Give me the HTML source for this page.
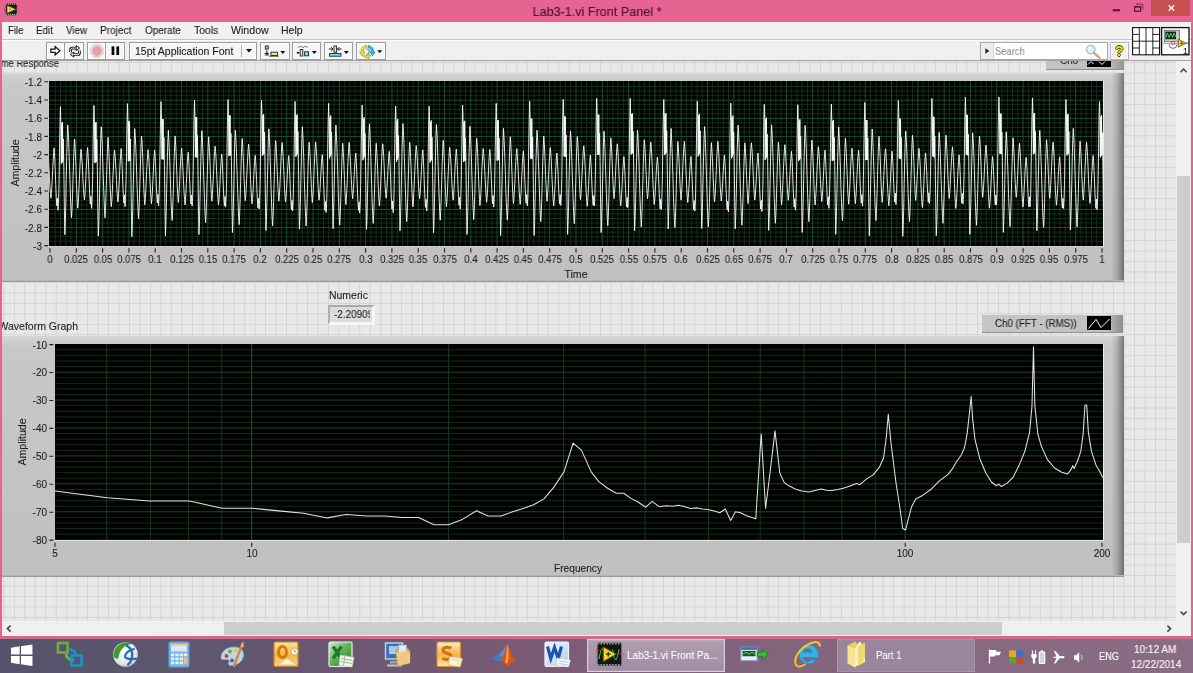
<!DOCTYPE html>
<html lang="en"><head><meta charset="utf-8"><title>Lab3-1.vi Front Panel</title>
<style>
html,body{margin:0;padding:0}
body{width:1193px;height:673px;overflow:hidden;position:relative;background:#E66492;font-family:"Liberation Sans",sans-serif;}
.t{position:absolute;white-space:nowrap;display:block;will-change:transform;-webkit-text-stroke:.1px}
.a{position:absolute}
.btn{position:absolute;top:42px;height:16px;border:1px solid #9c9c9c;background:#f5f5f5;box-shadow:inset 0 0 0 1px #fdfdfd}
svg{position:absolute;overflow:visible}
</style></head><body>
<div class="a" id="titlebar" style="left:0;top:0;width:1193px;height:22px;background:#E66492"><svg style="left:3.500px;top:3.200px" width="14.500" height="12.600" viewBox="0 0 14.500 12.600">
<rect x="1.800" y=".3" width="11" height="12" fill="#1a1d10"/>
<path d="M1.800 1.100h11M1.800 11.500h11" stroke="#b9b9b9" stroke-width="1.500" stroke-dasharray="1.100 .9"/>
<path d="M3.200 2.700L11.600 6.300 3.200 9.900z" fill="#efe062" stroke="#8a7c10" stroke-width=".5"/>
<circle cx="6" cy="6.300" r="1.100" fill="#b3a11a"/>
<path d="M0 5.200h2.200" stroke="#d8405a" stroke-width="1"/><path d="M0 7.600h2.200" stroke="#8a3fc0" stroke-width="1.200"/><path d="M12 6.300h2.500" stroke="#d8405a" stroke-width=".9"/></svg><span id="title" class="t" style="left:596.6px;top:3.9px;font-size:13px;line-height:15.35px;color:#4b1230;font-weight:normal;transform:translateX(-50%) scaleX(0.969);transform-origin:50% 0;">Lab3-1.vi Front Panel *</span><div class="a" style="left:1151px;top:0;width:39px;height:16px;background:#C75050"></div><svg style="left:1105px;top:0" width="88" height="22" viewBox="0 0 88 22">
<rect x="7.7" y="9.2" width="7.2" height="2.1" fill="#5e0f35"/>
<path d="M31 4.200h6.800v5.400" fill="none" stroke="#7a2a55" stroke-width="1"/>
<rect x="29.600" y="6.600" width="6" height="4.600" fill="none" stroke="#5e0f35" stroke-width="1.200"/><rect x="29" y="6" width="7.200" height="1.500" fill="#5e0f35"/>
<path d="M63.600 5.200l5.600 5.600M69.200 5.200l-5.600 5.600" stroke="#fff" stroke-width="1.300"/></svg></div><div class="a" id="menubar" style="left:2px;top:22px;width:1189px;height:17.600px;background:#f1f1f1;box-sizing:border-box;border-bottom:1px solid #c3c3c3"></div><div class="a" id="toolbar" style="left:2px;top:39.600px;width:1189px;height:22px;background:#f0f0f0;border-top:1px solid #fafafa;box-sizing:border-box"></div><span id="m0" class="t" style="left:8.2px;transform-origin:0 0;top:23.7px;font-size:10.5px;line-height:12.40px;color:#1b1b1b;font-weight:normal;transform:scaleX(0.910);">File</span><span id="m1" class="t" style="left:36.2px;transform-origin:0 0;top:23.7px;font-size:10.5px;line-height:12.40px;color:#1b1b1b;font-weight:normal;transform:scaleX(0.934);">Edit</span><span id="m2" class="t" style="left:66.0px;transform-origin:0 0;top:23.7px;font-size:10.5px;line-height:12.40px;color:#1b1b1b;font-weight:normal;transform:scaleX(0.930);">View</span><span id="m3" class="t" style="left:100.0px;transform-origin:0 0;top:23.7px;font-size:10.5px;line-height:12.40px;color:#1b1b1b;font-weight:normal;transform:scaleX(0.961);">Project</span><span id="m4" class="t" style="left:144.6px;transform-origin:0 0;top:23.7px;font-size:10.5px;line-height:12.40px;color:#1b1b1b;font-weight:normal;transform:scaleX(0.946);">Operate</span><span id="m5" class="t" style="left:193.6px;transform-origin:0 0;top:23.7px;font-size:10.5px;line-height:12.40px;color:#1b1b1b;font-weight:normal;transform:scaleX(0.987);">Tools</span><span id="m6" class="t" style="left:230.8px;transform-origin:0 0;top:23.7px;font-size:10.5px;line-height:12.40px;color:#1b1b1b;font-weight:normal;transform:scaleX(1.009);">Window</span><span id="m7" class="t" style="left:281.2px;transform-origin:0 0;top:23.7px;font-size:10.5px;line-height:12.40px;color:#1b1b1b;font-weight:normal;transform:scaleX(1.000);">Help</span><div class="btn" style="left:46.0px;width:17.4px"><svg style="left:3.400px;top:2.400px" width="11" height="11.500" viewBox="0 0 12 11"><path d="M1 3.600h4.600V1l5.200 4.500L5.600 10V7.400H1z" fill="#fff" stroke="#111" stroke-width="1.350" stroke-linejoin="miter"/></svg></div><div class="btn" style="left:64.4px;width:17.6px"><svg style="left:2.600px;top:2px" width="14" height="12.500" viewBox="0 0 14 12.500"><g fill="none" stroke-linejoin="round"><g stroke="#111" stroke-width="2.700"><path d="M2.600 7.200V4.600q0-1.500 1.500-1.500H9"/><path d="M11.400 5.400v2.600q0 1.500-1.500 1.500H5"/></g><path d="M8.200 .6l3.400 2.500-3.400 2.500z" fill="#fff" stroke="#111" stroke-width="1"/><path d="M5.800 12L2.400 9.500 5.800 7z" fill="#fff" stroke="#111" stroke-width="1"/><g stroke="#fff" stroke-width=".9"><path d="M2.600 7.200V4.600q0-1.500 1.500-1.500H8.400"/><path d="M11.400 5.400v2.600q0 1.500-1.500 1.500H5.600"/></g></g></svg></div><div class="btn" style="left:87.4px;width:16.8px"><svg style="left:1.300px;top:1px" width="14" height="14" viewBox="0 0 14 14"><path d="M4.300 .8h5.400l3.500 3.500v5.400l-3.500 3.500H4.300L.8 9.700V4.300z" fill="#efd3d6" stroke="#d8cccc" stroke-width=".9"/><circle cx="7" cy="7" r="4.700" fill="#e2a1a9"/></svg></div><div class="btn" style="left:105.3px;width:17.7px"><svg style="left:4.300px;top:3px" width="9" height="10" viewBox="0 0 9 10"><rect x="0.600" y="0.400" width="2.700" height="8.600" fill="#000"/><rect x="5.400" y="0.400" width="2.700" height="8.600" fill="#000"/></svg></div><div class="btn" style="left:129.3px;width:126.1px"><div class="a" style="left:111px;top:2px;width:1px;height:12px;background:#b5b5b5"></div><svg style="left:115.5px;top:6px" width="6" height="4" viewBox="0 0 6 4"><path d="M0 0h6L3 3.6z" fill="#111"/></svg></div><span id="font" class="t" style="left:135.4px;transform-origin:0 0;top:44.6px;font-size:10.5px;line-height:12.40px;color:#1b1b1b;font-weight:normal;transform:scaleX(1.003);">15pt Application Font</span><div class="btn" style="left:260.4px;width:27.4px"><svg style="left:3px;top:1.5px" width="24" height="13" viewBox="0 0 24 13">
<rect x="1.3" y="1" width="3" height="3" fill="#7fe0f0" stroke="#123" stroke-width=".9"/><path d="M2.8 5.2v5.6M.6 8.4h4.4M1 10.6l1.8-2 1.8 2" stroke="#111" stroke-width=".9" fill="none"/>
<rect x="7" y="7.2" width="6.4" height="3.2" fill="#f5ef8c" stroke="#123" stroke-width=".9"/><path d="M5.2 11.2h9.5" stroke="#222" stroke-width=".8"/>
<path d="M16.3 6h5L18.8 9z" fill="#111"/></svg></div><div class="btn" style="left:292.2px;width:27.0px"><svg style="left:3px;top:1.5px" width="24" height="13" viewBox="0 0 24 13">
<path d="M2 2.6c2-1.6 3-1.6 5 0M7 2.6c2-1.6 3-1.6 5 0" stroke="#555" stroke-width=".8" fill="none"/>
<path d="M.8 7.8h2.4" stroke="#111" stroke-width="1.6"/><rect x="4.2" y="4.6" width="2.6" height="6.4" fill="#f5ef8c" stroke="#123" stroke-width=".9"/>
<rect x="8.6" y="6.8" width="4" height="4" fill="#7fe0f0" stroke="#123" stroke-width=".9"/>
<path d="M15.8 6h5L18.3 9z" fill="#111"/></svg></div><div class="btn" style="left:323.6px;width:27.3px"><svg style="left:3px;top:1.5px" width="24" height="13" viewBox="0 0 24 13">
<rect x="6" y="1" width="2.6" height="6.2" fill="#f5ef8c" stroke="#123" stroke-width=".9"/>
<path d="M.8 4h4M9.6 4h4M3.2 2.2L5 4 3.2 5.8M11.2 2.2L9.4 4l1.8 1.8" stroke="#111" stroke-width=".9" fill="none"/>
<rect x="1.6" y="8.6" width="11.4" height="2.6" fill="#7fe0f0" stroke="#123" stroke-width=".9"/>
<path d="M15.8 6h5L18.3 9z" fill="#111"/></svg></div><div class="btn" style="left:356.3px;width:27.7px"><svg style="left:2px;top:.5px" width="26" height="15" viewBox="0 0 26 15">
<path d="M7.200 1.400C3.500 2.200 1.800 5 2.200 8.200L.600 8.400 3.400 12 5.800 8 4.400 8.100C4.200 6 5.200 4.200 7.600 3.600z" fill="#efe23a" stroke="#8f8600" stroke-width=".6"/>
<path d="M4.400 12.400c1.300 1.300 3 1.700 4.600 1.200l.400 1.300 2.200-3.600-4-.9.400 1.300c-.9.200-1.700 0-2.300-.5z" fill="#efe23a" stroke="#8f8600" stroke-width=".6"/>
<path d="M9.200 1.500c3.600.5 5.600 3.200 5.400 6.500l1.600.1-2.700 3.700-2.500-3.900 1.400.1C12.500 6 11.400 4.300 9 3.800z" fill="#3fb4da" stroke="#14708f" stroke-width=".6"/>
<path d="M7.400 5.200c1.500-.3 2.700.6 2.900 2 .2 1.400-.6 2.500-1.900 2.900" fill="none" stroke="#3fb4da" stroke-width="1.500"/>
<path d="M18.200 6.200h5l-2.500 3z" fill="#111"/></svg></div><div class="a" style="left:980px;top:42px;width:126px;height:16px;border:1px solid #a9a9a9;background:#fff;box-shadow:0 1px 1px #d0d0d0"><div class="a" style="left:0;top:0;width:12px;height:16px;background:#ececec;border-right:1px solid #d5d5d5"></div><svg style="left:3.5px;top:5px" width="5" height="6" viewBox="0 0 5 6"><path d="M.3 .3L4.4 3 .3 5.7z" fill="#222"/></svg><svg style="left:104px;top:1px" width="17" height="15" viewBox="0 0 17 15"><circle cx="5.8" cy="5.6" r="4.3" fill="#d9ecf8" stroke="#9cc3de" stroke-width="1.2"/><circle cx="4.8" cy="4.6" r="2" fill="#f4fbff"/><path d="M9 8.8l5.6 5" stroke="#d9a27c" stroke-width="2.4" stroke-linecap="round"/></svg></div><span id="search" class="t" style="left:995.2px;transform-origin:0 0;top:45.3px;font-size:10.5px;line-height:12.40px;color:#8b8b8b;font-weight:normal;transform:scaleX(0.889);">Search</span><div class="btn" style="left:1110.2px;width:17px;height:15.5px;top:42.4px;background:#f0f0f0;border-color:#b7b7b7"></div><span id="q" class="t" style="left:1114.5px;transform-origin:0 0;top:43.4px;font-size:14px;line-height:16.53px;color:#e9dc1c;font-weight:bold;transform:scaleX(1.000);text-shadow:-.7px 0 #4a4a00,.7px 0 #4a4a00,0 .7px #4a4a00,0 -.7px #4a4a00;">?</span><svg style="left:1132px;top:27px" width="58" height="29" viewBox="0 0 58 29">
<rect x=".6" y=".6" width="27" height="27.2" fill="#fff" stroke="#111" stroke-width="1.1"/>
<path d="M7.3 .6v27.2M14 .6v27.2M20.8 .6v27.2M.6 14.2h27M.6 7.4h6.7M.6 21h6.7M20.8 7.4h6.8M20.8 21h6.8" stroke="#111" stroke-width=".9" fill="none"/>
<rect x="29.6" y=".6" width="27.4" height="27.2" fill="#fff" stroke="#111" stroke-width="1.3"/>
<rect x="32.2" y="3.2" width="15.4" height="11.6" fill="#c9c9c9" stroke="#444" stroke-width=".6"/>
<rect x="33.4" y="4.6" width="10.6" height="7.6" fill="#0c2a12"/>
<path d="M33.8 10.6l1.6-4.6 1.7 4.6 1.7-4.6 1.7 4.6 1.6-4.6 1.4 4" stroke="#54e06a" stroke-width=".9" fill="none"/>
<path d="M37 17.4a4 4 0 0 0 8 0" fill="none" stroke="#4c62c8" stroke-width="1"/><circle cx="41" cy="16.2" r="1.8" fill="none" stroke="#d33" stroke-width=".8"/>
<path d="M31 16.4h16" stroke="#d66" stroke-width=".8"/>
<path d="M46.4 12.2l7.6 4-7.6 4z" fill="#f2df1c" stroke="#5a4e00" stroke-width=".8"/><path d="M48 16.2h3.4M49.7 14.6v3.2" stroke="#222" stroke-width=".7"/><path d="M54 16.2h2.6" stroke="#222" stroke-width=".8"/>
</svg><span id="one" class="t" style="left:1182.5px;transform-origin:0 0;top:45.6px;font-size:8.5px;line-height:10.04px;color:#111;font-weight:normal;transform:scaleX(1.000);">1</span><div class="a" id="panel" style="left:2px;top:61px;width:1174px;height:560px;overflow:hidden;background-color:#e8e8e8;background-image:linear-gradient(to right,#d4d4d4 1px,transparent 1px),linear-gradient(to bottom,#d4d4d4 1px,transparent 1px);background-size:10.48px 10.48px;background-position:1.40px 1.10px"><span id="tresp" class="t" style="left:57.0px;transform-origin:0 0;top:-3.4px;font-size:10px;line-height:11.81px;color:#1e1e1e;font-weight:normal;transform:translateX(-100%) scaleX(0.945);transform-origin:100% 0;">Time Response</span><div class="a" style="left:1044px;top:-9px;width:78px;height:17.5px;background:linear-gradient(to right,#c3c3c3 0,#bfbfbf 80%,#969696 100%);border-bottom:1px solid #8f8f8f;box-sizing:border-box"></div><div class="a" style="left:1085.2px;top:-9px;width:23.8px;height:14.7px;background:#000"></div><svg style="left:1085.2px;top:-9px" width="24" height="15" viewBox="0 0 24 15"><path d="M1 12.500L4 9.500l2.500 2.500M12 9.500l3 3 3-3" stroke="#fff" stroke-width="1" fill="none"/></svg><span id="ch0" class="t" style="left:1057.9px;transform-origin:0 0;top:-6.4px;font-size:10px;line-height:11.81px;color:#1e1e1e;font-weight:normal;transform:scaleX(1.000);">Ch0</span><div class="a" style="left:-12px;top:12.299999999999997px;width:1134px;height:209.2px;background:#c1c1c1;background-image:linear-gradient(to right,rgba(0,0,0,0) 0,rgba(0,0,0,0) 1121px,rgba(0,0,0,.10) 1126px,rgba(0,0,0,.42) 1134px),linear-gradient(to bottom,#d8d8d8 0,#d0d0d0 3px,#cacaca 9px,#c8c8c8 14px,#c0c0c0 100%);box-shadow:inset 0 -1px 0 #9a9a9a,inset 0 -2px 0 #b4b4b4"></div><svg style="left:47.0px;top:19.8px;overflow:hidden" width="1054.0" height="165.2" viewBox="49.0 80.8 1054.0 165.2"><rect x="49.0" y="80.8" width="1054.0" height="165.2" fill="#000"/><path d="M55.26 80.8V246.0M60.52 80.8V246.0M65.78 80.8V246.0M71.04 80.8V246.0M81.56 80.8V246.0M86.82 80.8V246.0M92.08 80.8V246.0M97.34 80.8V246.0M107.86 80.8V246.0M113.12 80.8V246.0M118.38 80.8V246.0M123.64 80.8V246.0M134.16 80.8V246.0M139.42 80.8V246.0M144.68 80.8V246.0M149.94 80.8V246.0M160.46 80.8V246.0M165.72 80.8V246.0M170.98 80.8V246.0M176.24 80.8V246.0M186.76 80.8V246.0M192.02 80.8V246.0M197.28 80.8V246.0M202.54 80.8V246.0M213.06 80.8V246.0M218.32 80.8V246.0M223.58 80.8V246.0M228.84 80.8V246.0M239.36 80.8V246.0M244.62 80.8V246.0M249.88 80.8V246.0M255.14 80.8V246.0M265.66 80.8V246.0M270.92 80.8V246.0M276.18 80.8V246.0M281.44 80.8V246.0M291.96 80.8V246.0M297.22 80.8V246.0M302.48 80.8V246.0M307.74 80.8V246.0M318.26 80.8V246.0M323.52 80.8V246.0M328.78 80.8V246.0M334.04 80.8V246.0M344.56 80.8V246.0M349.82 80.8V246.0M355.08 80.8V246.0M360.34 80.8V246.0M370.86 80.8V246.0M376.12 80.8V246.0M381.38 80.8V246.0M386.64 80.8V246.0M397.16 80.8V246.0M402.42 80.8V246.0M407.68 80.8V246.0M412.94 80.8V246.0M423.46 80.8V246.0M428.72 80.8V246.0M433.98 80.8V246.0M439.24 80.8V246.0M449.76 80.8V246.0M455.02 80.8V246.0M460.28 80.8V246.0M465.54 80.8V246.0M476.06 80.8V246.0M481.32 80.8V246.0M486.58 80.8V246.0M491.84 80.8V246.0M502.36 80.8V246.0M507.62 80.8V246.0M512.88 80.8V246.0M518.14 80.8V246.0M528.66 80.8V246.0M533.92 80.8V246.0M539.18 80.8V246.0M544.44 80.8V246.0M554.96 80.8V246.0M560.22 80.8V246.0M565.48 80.8V246.0M570.74 80.8V246.0M581.26 80.8V246.0M586.52 80.8V246.0M591.78 80.8V246.0M597.04 80.8V246.0M607.56 80.8V246.0M612.82 80.8V246.0M618.08 80.8V246.0M623.34 80.8V246.0M633.86 80.8V246.0M639.12 80.8V246.0M644.38 80.8V246.0M649.64 80.8V246.0M660.16 80.8V246.0M665.42 80.8V246.0M670.68 80.8V246.0M675.94 80.8V246.0M686.46 80.8V246.0M691.72 80.8V246.0M696.98 80.8V246.0M702.24 80.8V246.0M712.76 80.8V246.0M718.02 80.8V246.0M723.28 80.8V246.0M728.54 80.8V246.0M739.06 80.8V246.0M744.32 80.8V246.0M749.58 80.8V246.0M754.84 80.8V246.0M765.36 80.8V246.0M770.62 80.8V246.0M775.88 80.8V246.0M781.14 80.8V246.0M791.66 80.8V246.0M796.92 80.8V246.0M802.18 80.8V246.0M807.44 80.8V246.0M817.96 80.8V246.0M823.22 80.8V246.0M828.48 80.8V246.0M833.74 80.8V246.0M844.26 80.8V246.0M849.52 80.8V246.0M854.78 80.8V246.0M860.04 80.8V246.0M870.56 80.8V246.0M875.82 80.8V246.0M881.08 80.8V246.0M886.34 80.8V246.0M896.86 80.8V246.0M902.12 80.8V246.0M907.38 80.8V246.0M912.64 80.8V246.0M923.16 80.8V246.0M928.42 80.8V246.0M933.68 80.8V246.0M938.94 80.8V246.0M949.46 80.8V246.0M954.72 80.8V246.0M959.98 80.8V246.0M965.24 80.8V246.0M975.76 80.8V246.0M981.02 80.8V246.0M986.28 80.8V246.0M991.54 80.8V246.0M1002.06 80.8V246.0M1007.32 80.8V246.0M1012.58 80.8V246.0M1017.84 80.8V246.0M1028.36 80.8V246.0M1033.62 80.8V246.0M1038.88 80.8V246.0M1044.14 80.8V246.0M1054.66 80.8V246.0M1059.92 80.8V246.0M1065.18 80.8V246.0M1070.44 80.8V246.0M1080.96 80.8V246.0M1086.22 80.8V246.0M1091.48 80.8V246.0M1096.74 80.8V246.0M49.0 86.35H1103.0M49.0 90.90H1103.0M49.0 95.45H1103.0M49.0 104.55H1103.0M49.0 109.10H1103.0M49.0 113.65H1103.0M49.0 122.75H1103.0M49.0 127.30H1103.0M49.0 131.85H1103.0M49.0 140.95H1103.0M49.0 145.50H1103.0M49.0 150.05H1103.0M49.0 159.15H1103.0M49.0 163.70H1103.0M49.0 168.25H1103.0M49.0 177.35H1103.0M49.0 181.90H1103.0M49.0 186.45H1103.0M49.0 195.55H1103.0M49.0 200.10H1103.0M49.0 204.65H1103.0M49.0 213.75H1103.0M49.0 218.30H1103.0M49.0 222.85H1103.0M49.0 231.95H1103.0M49.0 236.50H1103.0M49.0 241.05H1103.0" stroke="#11351b" stroke-width=".9" fill="none"/><path d="M76.30 80.8V246.0M102.60 80.8V246.0M128.90 80.8V246.0M155.20 80.8V246.0M181.50 80.8V246.0M207.80 80.8V246.0M234.10 80.8V246.0M260.40 80.8V246.0M286.70 80.8V246.0M313.00 80.8V246.0M339.30 80.8V246.0M365.60 80.8V246.0M391.90 80.8V246.0M418.20 80.8V246.0M444.50 80.8V246.0M470.80 80.8V246.0M497.10 80.8V246.0M523.40 80.8V246.0M549.70 80.8V246.0M576.00 80.8V246.0M602.30 80.8V246.0M628.60 80.8V246.0M654.90 80.8V246.0M681.20 80.8V246.0M707.50 80.8V246.0M733.80 80.8V246.0M760.10 80.8V246.0M786.40 80.8V246.0M812.70 80.8V246.0M839.00 80.8V246.0M865.30 80.8V246.0M891.60 80.8V246.0M917.90 80.8V246.0M944.20 80.8V246.0M970.50 80.8V246.0M996.80 80.8V246.0M1023.10 80.8V246.0M1049.40 80.8V246.0M1075.70 80.8V246.0M49.0 100.00H1103.0M49.0 118.20H1103.0M49.0 136.40H1103.0M49.0 154.60H1103.0M49.0 172.80H1103.0M49.0 191.00H1103.0M49.0 209.20H1103.0M49.0 227.40H1103.0" stroke="#1f582c" stroke-width=".9" fill="none"/><polyline points="46.1,172.3 46.5,161.7 47.0,153.1 47.5,147.6 48.0,152.2 48.5,159.3 48.9,168.1 49.4,177.6 49.9,186.4 50.4,193.5 50.9,198.1 51.3,193.5 51.8,186.4 52.3,177.6 52.7,168.2 53.2,159.4 53.6,152.3 54.1,147.7 54.6,156.0 55.2,169.2 55.7,184.2 56.2,197.4 56.8,205.7 57.1,201.8 57.4,197.9 57.7,204.0 58.0,210.1 58.2,206.4 58.5,202.7 59.0,184.1 59.4,154.6 59.9,125.1 60.4,106.5 60.6,115.5 60.9,124.5 61.1,143.9 61.3,163.4 61.5,143.1 61.7,122.9 61.9,142.7 62.1,162.5 62.3,142.1 62.5,121.8 62.7,141.5 62.9,161.3 63.1,150.0 63.3,138.8 63.8,166.3 64.3,207.0 64.8,234.5 65.3,222.2 65.8,202.9 66.2,179.6 66.7,156.3 67.2,137.0 67.7,124.7 68.2,131.9 68.7,142.7 69.1,156.2 69.6,171.2 70.1,186.2 70.5,199.8 71.0,210.5 71.5,217.7 72.0,208.9 72.5,195.0 73.0,178.3 73.5,161.5 74.0,147.7 74.5,138.8 75.0,145.2 75.4,154.9 75.9,167.0 76.3,179.9 76.8,191.9 77.2,201.7 77.7,208.0 78.2,202.6 78.6,194.3 79.1,184.0 79.6,173.0 80.1,162.8 80.5,154.5 81.0,149.1 81.5,153.7 82.0,160.8 82.5,169.7 82.9,179.1 83.4,188.0 83.9,195.1 84.4,199.7 84.9,194.9 85.3,187.6 85.8,178.4 86.2,168.7 86.7,159.5 87.1,152.2 87.6,147.4 88.0,153.7 88.5,163.7 88.9,175.7 89.4,187.7 89.8,197.6 90.3,203.9 90.6,200.0 90.9,196.1 91.2,202.1 91.5,208.2 91.8,204.5 92.0,200.8 92.5,182.4 93.0,153.1 93.4,123.7 93.9,105.3 94.2,114.4 94.4,123.6 94.6,143.1 94.8,162.6 95.0,142.5 95.2,122.4 95.4,142.3 95.6,162.3 95.8,142.1 96.0,121.9 96.2,141.7 96.4,161.6 96.6,150.5 96.8,139.3 97.3,167.1 97.8,208.2 98.3,235.9 98.8,223.7 99.3,204.5 99.8,181.2 100.3,158.0 100.7,138.8 101.2,126.5 101.7,133.5 102.2,144.1 102.6,157.3 103.1,172.0 103.6,186.7 104.1,200.0 104.5,210.5 105.0,217.6 105.5,208.6 106.0,194.4 106.5,177.3 107.0,160.2 107.5,146.1 108.0,137.1 108.5,143.4 108.9,153.2 109.4,165.3 109.8,178.3 110.3,190.4 110.8,200.2 111.2,206.5 111.7,201.3 112.2,193.4 112.6,183.5 113.1,172.9 113.6,163.0 114.0,155.0 114.5,149.8 115.0,154.5 115.5,161.8 116.0,170.9 116.5,180.6 116.9,189.7 117.4,197.0 117.9,201.7 118.4,196.8 118.8,189.3 119.3,179.9 119.7,170.0 120.2,160.6 120.7,153.1 121.1,148.2 121.7,156.0 122.2,168.4 122.7,182.6 123.3,195.1 123.8,202.9 124.1,198.8 124.4,194.7 124.7,200.6 125.0,206.5 125.3,202.8 125.5,199.0 126.0,180.5 126.5,151.2 127.0,121.9 127.4,103.4 127.7,112.6 127.9,121.8 128.1,141.4 128.3,161.0 128.5,141.0 128.7,121.0 128.9,141.0 129.1,161.0 129.3,141.0 129.5,120.9 129.7,140.9 129.9,160.8 130.1,149.8 130.3,138.8 130.8,166.9 131.3,208.4 131.8,236.5 132.3,224.4 132.8,205.4 133.3,182.5 133.8,159.5 134.3,140.5 134.7,128.4 135.2,135.4 135.7,145.8 136.2,158.9 136.6,173.5 137.1,188.0 137.6,201.1 138.1,211.5 138.5,218.5 139.0,209.2 139.5,194.7 140.0,177.2 140.5,159.6 141.0,145.1 141.5,135.9 142.0,142.2 142.5,151.8 142.9,163.8 143.4,176.6 143.8,188.6 144.3,198.2 144.7,204.5 145.2,199.4 145.7,191.7 146.2,182.1 146.6,171.8 147.1,162.2 147.6,154.4 148.0,149.4 148.5,154.4 149.0,162.0 149.5,171.4 150.0,181.5 150.5,191.0 151.0,198.6 151.4,203.5 151.9,198.6 152.4,191.1 152.8,181.7 153.3,171.7 153.7,162.3 154.2,154.8 154.6,149.9 155.1,155.8 155.5,165.1 156.0,176.3 156.4,187.6 156.9,196.9 157.3,202.8 157.6,198.5 157.9,194.2 158.2,199.9 158.5,205.6 158.8,201.7 159.0,197.8 159.5,179.2 160.0,149.6 160.5,120.0 161.0,101.4 161.2,110.6 161.5,119.8 161.7,139.4 161.9,159.0 162.1,139.0 162.3,119.0 162.5,139.0 162.7,159.1 162.9,139.1 163.1,119.1 163.3,139.1 163.5,159.2 163.7,148.3 163.9,137.4 164.4,165.7 164.9,207.6 165.4,235.9 165.8,224.1 166.3,205.5 166.8,182.9 167.3,160.4 167.8,141.8 168.3,129.9 168.7,136.9 169.2,147.4 169.7,160.5 170.2,175.1 170.6,189.7 171.1,202.8 171.6,213.3 172.1,220.3 172.6,210.8 173.1,196.0 173.6,178.0 174.1,160.0 174.6,145.2 175.1,135.7 175.5,141.8 176.0,151.2 176.4,162.8 176.9,175.3 177.3,187.0 177.8,196.3 178.3,202.4 178.7,197.5 179.2,189.8 179.7,180.3 180.1,170.1 180.6,160.6 181.1,153.0 181.6,148.0 182.0,153.2 182.5,161.1 183.0,171.0 183.5,181.6 184.0,191.5 184.5,199.4 185.0,204.6 185.4,199.8 185.9,192.4 186.3,183.2 186.8,173.4 187.2,164.2 187.7,156.8 188.2,152.0 188.6,157.8 189.1,166.9 189.5,177.9 190.0,188.9 190.4,198.0 190.9,203.8 191.2,199.3 191.5,194.8 191.8,200.3 192.1,205.8 192.3,201.7 192.6,197.6 193.0,178.7 193.5,148.7 194.0,118.8 194.5,99.9 194.7,109.0 195.0,118.0 195.2,137.5 195.4,157.1 195.6,137.0 195.8,117.0 196.0,137.0 196.2,157.0 196.4,137.0 196.6,117.0 196.8,137.0 197.0,157.1 197.2,146.2 197.4,135.3 197.9,163.8 198.4,205.9 198.9,234.4 199.4,222.8 199.8,204.5 200.3,182.5 200.8,160.4 201.3,142.1 201.8,130.5 202.3,137.6 202.7,148.2 203.2,161.6 203.7,176.5 204.2,191.3 204.6,204.7 205.1,215.3 205.6,222.4 206.1,212.8 206.6,197.8 207.1,179.5 207.6,161.3 208.1,146.2 208.6,136.6 209.0,142.5 209.5,151.5 210.0,162.8 210.4,174.8 210.9,186.0 211.3,195.1 211.8,201.0 212.3,195.9 212.7,188.2 213.2,178.6 213.7,168.4 214.1,158.8 214.6,151.0 215.1,146.0 215.6,151.4 216.1,159.6 216.5,169.8 217.0,180.8 217.5,191.0 218.0,199.3 218.5,204.6 218.9,200.0 219.4,192.9 219.9,184.0 220.3,174.5 220.8,165.7 221.2,158.6 221.7,153.9 222.1,159.7 222.6,168.8 223.0,179.8 223.5,190.8 223.9,199.8 224.4,205.6 224.7,201.0 225.0,196.3 225.3,201.6 225.6,206.9 225.8,202.7 226.1,198.4 226.6,179.3 227.0,148.9 227.5,118.5 228.0,99.3 228.3,108.2 228.5,117.1 228.7,136.5 228.9,155.9 229.1,135.7 229.3,115.5 229.5,135.4 229.7,155.4 229.9,135.2 230.1,115.1 230.3,135.1 230.5,155.1 230.7,144.2 230.9,133.3 231.4,161.8 231.9,203.9 232.4,232.4 232.9,220.9 233.4,202.9 233.9,181.2 234.3,159.4 234.8,141.4 235.3,130.0 235.8,137.2 236.3,148.2 236.7,161.9 237.2,177.2 237.7,192.4 238.2,206.2 238.6,217.1 239.1,224.4 239.6,214.8 240.1,199.6 240.6,181.3 241.1,163.1 241.6,147.9 242.1,138.3 242.6,144.0 243.0,152.7 243.5,163.6 243.9,175.2 244.4,186.0 244.8,194.8 245.3,200.5 245.8,195.3 246.2,187.3 246.7,177.5 247.2,166.9 247.7,157.0 248.1,149.1 248.6,143.9 249.1,149.4 249.6,157.8 250.1,168.2 250.5,179.3 251.0,189.8 251.5,198.2 252.0,203.6 252.5,199.2 252.9,192.4 253.4,183.9 253.8,174.9 254.3,166.4 254.7,159.6 255.2,155.2 255.7,161.0 256.1,170.3 256.6,181.4 257.0,192.6 257.5,201.8 257.9,207.7 258.2,203.0 258.5,198.3 258.8,203.5 259.1,208.8 259.4,204.4 259.6,200.1 260.1,180.7 260.6,150.0 261.0,119.2 261.5,99.8 261.8,108.5 262.0,117.2 262.2,136.5 262.4,155.7 262.6,135.4 262.8,115.1 263.0,134.8 263.2,154.6 263.4,134.4 263.6,114.1 263.8,134.0 264.0,153.8 264.2,142.8 264.4,131.8 264.9,160.1 265.4,202.0 265.9,230.4 266.4,219.0 266.9,201.1 267.4,179.4 267.9,157.8 268.3,139.9 268.8,128.5 269.3,136.0 269.8,147.3 270.2,161.4 270.7,177.1 271.2,192.7 271.7,206.9 272.1,218.1 272.6,225.6 273.1,216.1 273.6,201.1 274.1,183.0 274.6,164.9 275.1,149.9 275.6,140.4 276.1,145.9 276.5,154.4 277.0,165.0 277.4,176.4 277.9,187.0 278.4,195.5 278.8,201.0 279.3,195.7 279.8,187.4 280.2,177.2 280.7,166.2 281.2,156.0 281.6,147.7 282.1,142.3 282.6,147.8 283.1,156.2 283.6,166.6 284.1,177.7 284.5,188.1 285.0,196.5 285.5,201.9 286.0,197.7 286.4,191.1 286.9,183.0 287.3,174.3 287.8,166.2 288.3,159.6 288.7,155.4 289.3,163.1 289.8,175.4 290.3,189.4 290.9,201.7 291.4,209.4 291.7,204.8 292.0,200.2 292.3,205.5 292.6,210.8 292.9,206.4 293.1,202.0 293.6,182.6 294.1,151.6 294.6,120.7 295.0,101.2 295.3,109.8 295.5,118.4 295.7,137.5 295.9,156.6 296.1,136.2 296.3,115.7 296.5,135.3 296.7,155.0 296.9,134.6 297.1,114.2 297.3,133.9 297.5,153.6 297.7,142.4 297.9,131.3 298.4,159.3 298.9,200.8 299.4,228.9 299.9,217.5 300.4,199.5 300.9,177.8 301.4,156.0 301.9,138.0 302.3,126.6 302.8,134.2 303.3,145.7 303.8,160.2 304.2,176.2 304.7,192.2 305.2,206.6 305.7,218.1 306.1,225.8 306.6,216.4 307.1,201.7 307.6,184.0 308.1,166.2 308.6,151.5 309.1,142.1 309.6,147.7 310.1,156.1 310.5,166.7 311.0,177.9 311.4,188.5 311.9,197.0 312.3,202.5 312.8,196.9 313.3,188.4 313.8,177.8 314.2,166.4 314.7,155.8 315.2,147.3 315.6,141.7 316.1,147.1 316.6,155.3 317.1,165.4 317.6,176.3 318.1,186.5 318.6,194.7 319.0,200.0 319.5,195.9 320.0,189.5 320.4,181.5 320.9,173.0 321.3,165.1 321.8,158.7 322.2,154.5 322.8,162.5 323.3,175.2 323.9,189.7 324.4,202.4 324.9,210.3 325.2,205.9 325.5,201.4 325.8,206.9 326.1,212.3 326.4,208.0 326.6,203.7 327.1,184.3 327.6,153.4 328.1,122.5 328.6,103.1 328.8,111.6 329.1,120.1 329.3,139.2 329.5,158.2 329.7,137.7 329.9,117.2 330.1,136.7 330.3,156.2 330.5,135.8 330.7,115.3 330.9,134.9 331.1,154.4 331.3,143.1 331.5,131.8 332.0,159.6 332.5,200.7 333.0,228.5 333.4,216.9 333.9,198.7 334.4,176.6 334.9,154.6 335.4,136.4 335.9,124.8 336.3,132.5 336.8,144.1 337.3,158.7 337.8,174.8 338.2,191.0 338.7,205.5 339.2,217.1 339.7,224.9 340.2,215.7 340.7,201.4 341.2,184.0 341.7,166.6 342.2,152.3 342.7,143.1 343.1,148.7 343.6,157.3 344.0,168.0 344.5,179.4 344.9,190.1 345.4,198.7 345.9,204.3 346.3,198.6 346.8,189.9 347.3,179.0 347.7,167.4 348.2,156.6 348.7,147.9 349.2,142.2 349.6,147.4 350.1,155.3 350.6,165.1 351.1,175.6 351.6,185.5 352.1,193.4 352.6,198.6 353.0,194.4 353.5,188.0 353.9,180.0 354.4,171.5 354.8,163.5 355.3,157.1 355.8,152.9 356.3,161.0 356.8,174.1 357.4,188.9 357.9,202.0 358.5,210.1 358.8,205.9 359.1,201.7 359.4,207.3 359.7,212.9 359.9,208.8 360.2,204.7 360.6,185.4 361.1,154.8 361.6,124.1 362.1,104.9 362.3,113.4 362.6,122.0 362.8,141.0 363.0,160.1 363.2,139.6 363.4,119.1 363.6,138.6 363.8,158.1 364.0,137.5 364.2,117.0 364.4,136.5 364.6,156.1 364.8,144.7 365.0,133.3 365.5,160.8 366.0,201.6 366.5,229.1 367.0,217.3 367.4,198.8 367.9,176.4 368.4,153.9 368.9,135.4 369.4,123.6 369.9,131.3 370.3,142.8 370.8,157.3 371.3,173.4 371.8,189.5 372.2,204.0 372.7,215.6 373.2,223.2 373.7,214.3 374.2,200.2 374.7,183.2 375.2,166.1 375.7,152.0 376.2,143.1 376.6,148.8 377.1,157.7 377.6,168.6 378.0,180.3 378.5,191.3 378.9,200.1 379.4,205.9 379.9,200.2 380.3,191.4 380.8,180.6 381.3,168.9 381.7,158.1 382.2,149.3 382.7,143.6 383.2,148.6 383.7,156.2 384.1,165.7 384.6,175.9 385.1,185.4 385.6,193.0 386.1,198.0 386.5,193.7 387.0,187.1 387.5,178.9 387.9,170.1 388.4,161.9 388.8,155.3 389.3,151.0 389.8,159.3 390.4,172.5 390.9,187.5 391.4,200.7 392.0,208.9 392.3,204.9 392.6,200.8 392.9,206.6 393.2,212.4 393.4,208.4 393.7,204.5 394.2,185.5 394.6,155.2 395.1,125.0 395.6,105.9 395.9,114.6 396.1,123.3 396.3,142.5 396.5,161.6 396.7,141.2 396.9,120.7 397.1,140.3 397.3,159.8 397.5,139.3 397.7,118.8 397.9,138.4 398.1,157.9 398.3,146.5 398.5,135.2 399.0,162.6 399.5,203.2 400.0,230.6 400.5,218.7 401.0,199.8 401.5,177.0 401.9,154.3 402.4,135.4 402.9,123.4 403.4,131.0 403.9,142.4 404.3,156.6 404.8,172.4 405.3,188.3 405.8,202.5 406.2,213.9 406.7,221.4 407.2,212.5 407.7,198.6 408.2,181.7 408.7,164.8 409.2,150.9 409.7,142.0 410.2,147.9 410.6,157.0 411.1,168.3 411.5,180.4 412.0,191.7 412.4,200.8 412.9,206.7 413.4,201.1 413.8,192.5 414.3,181.8 414.8,170.4 415.3,159.7 415.7,151.1 416.2,145.5 416.7,150.3 417.2,157.8 417.7,167.0 418.1,176.9 418.6,186.2 419.1,193.6 419.6,198.5 420.1,194.0 420.5,187.1 421.0,178.6 421.4,169.5 421.9,160.9 422.3,154.0 422.8,149.6 423.3,157.7 423.9,170.8 424.4,185.8 425.0,198.9 425.5,207.1 425.8,203.1 426.1,199.1 426.4,205.0 426.7,210.9 427.0,207.1 427.2,203.3 427.7,184.5 428.2,154.6 428.6,124.8 429.1,106.0 429.4,114.8 429.6,123.7 429.8,143.0 430.0,162.3 430.2,141.9 430.4,121.6 430.6,141.3 430.8,161.0 431.0,140.6 431.2,120.2 431.4,139.8 431.6,159.5 431.8,148.2 432.0,136.9 432.5,164.4 433.0,205.0 433.5,232.6 434.0,220.5 434.5,201.5 435.0,178.5 435.5,155.5 435.9,136.5 436.4,124.4 436.9,131.8 437.4,142.8 437.8,156.7 438.3,172.2 438.8,187.6 439.3,201.5 439.7,212.6 440.2,220.0 440.7,211.1 441.2,197.0 441.7,180.1 442.2,163.1 442.7,149.1 443.2,140.1 443.7,146.2 444.1,155.6 444.6,167.2 445.0,179.5 445.5,191.1 446.0,200.5 446.4,206.6 446.9,201.1 447.4,192.8 447.8,182.4 448.3,171.3 448.8,161.0 449.2,152.7 449.7,147.2 450.2,152.0 450.7,159.5 451.2,168.7 451.7,178.5 452.1,187.7 452.6,195.2 453.1,200.0 453.6,195.3 454.0,188.1 454.5,179.2 454.9,169.7 455.4,160.8 455.9,153.6 456.3,148.9 456.9,156.9 457.4,169.7 457.9,184.3 458.5,197.1 459.0,205.1 459.3,201.1 459.6,197.1 459.9,203.0 460.2,208.9 460.5,205.1 460.7,201.4 461.2,182.7 461.7,153.1 462.2,123.5 462.6,104.9 462.9,113.9 463.1,123.0 463.3,142.4 463.5,161.8 463.7,141.7 463.9,121.5 464.1,141.3 464.3,161.1 464.5,140.9 464.7,120.6 464.9,140.4 465.1,160.2 465.3,149.0 465.5,137.8 466.0,165.6 466.5,206.6 467.0,234.3 467.5,222.2 468.0,203.2 468.5,180.2 469.0,157.2 469.5,138.2 469.9,126.1 470.4,133.3 470.9,144.2 471.4,157.7 471.8,172.8 472.3,187.9 472.8,201.4 473.3,212.2 473.7,219.4 474.2,210.4 474.7,196.1 475.2,178.8 475.7,161.5 476.2,147.3 476.7,138.2 477.2,144.3 477.7,153.7 478.1,165.5 478.6,178.0 479.0,189.7 479.5,199.2 479.9,205.3 480.4,200.1 480.9,192.1 481.4,182.1 481.8,171.5 482.3,161.5 482.8,153.5 483.2,148.3 483.7,153.2 484.2,160.8 484.7,170.2 485.2,180.2 485.7,189.6 486.2,197.1 486.6,202.1 487.1,197.2 487.6,189.8 488.0,180.6 488.5,170.8 488.9,161.6 489.4,154.2 489.8,149.3 490.4,157.1 490.9,169.4 491.5,183.5 492.0,195.9 492.5,203.6 492.8,199.5 493.1,195.3 493.4,201.1 493.7,206.9 494.0,203.1 494.2,199.3 494.7,180.7 495.2,151.2 495.7,121.7 496.2,103.1 496.4,112.2 496.7,121.3 496.9,140.9 497.1,160.4 497.3,140.4 497.5,120.3 497.7,140.2 497.9,160.2 498.1,140.1 498.3,120.0 498.5,139.9 498.7,159.8 498.9,148.8 499.1,137.8 499.6,165.8 500.1,207.3 500.6,235.3 501.0,223.3 501.5,204.5 502.0,181.8 502.5,159.0 503.0,140.2 503.5,128.2 503.9,135.3 504.4,145.9 504.9,159.3 505.4,174.1 505.8,188.9 506.3,202.3 506.8,212.9 507.3,220.0 507.8,210.6 508.3,196.0 508.8,178.3 509.3,160.6 509.8,145.9 510.3,136.6 510.7,142.7 511.2,152.1 511.6,163.7 512.1,176.2 512.5,187.8 513.0,197.2 513.5,203.3 513.9,198.3 514.4,190.6 514.9,181.0 515.3,170.7 515.8,161.1 516.3,153.4 516.8,148.4 517.2,153.5 517.7,161.3 518.2,171.0 518.7,181.5 519.2,191.2 519.7,199.0 520.2,204.1 520.6,199.2 521.1,191.7 521.5,182.4 522.0,172.5 522.4,163.1 522.9,155.6 523.4,150.8 523.8,156.6 524.3,165.8 524.7,176.9 525.2,188.0 525.6,197.2 526.1,203.1 526.4,198.7 526.7,194.3 527.0,200.0 527.3,205.6 527.5,201.6 527.8,197.7 528.2,179.0 528.7,149.3 529.2,119.6 529.7,101.0 529.9,110.1 530.2,119.2 530.4,138.8 530.6,158.4 530.8,138.4 531.0,118.4 531.2,138.4 531.4,158.4 531.6,138.4 531.8,118.4 532.0,138.4 532.2,158.5 532.4,147.6 532.6,136.7 533.1,165.0 533.6,206.9 534.1,235.3 534.6,223.5 535.0,205.0 535.5,182.6 536.0,160.3 536.5,141.8 537.0,130.0 537.5,137.1 537.9,147.7 538.4,161.0 538.9,175.7 539.4,190.5 539.8,203.8 540.3,214.4 540.8,221.4 541.3,211.9 541.8,196.9 542.3,178.7 542.8,160.5 543.3,145.5 543.8,135.9 544.2,141.9 544.7,151.1 545.2,162.5 545.6,174.6 546.1,186.0 546.5,195.2 547.0,201.2 547.5,196.2 547.9,188.7 548.4,179.3 548.9,169.3 549.3,159.9 549.8,152.3 550.3,147.4 550.8,152.7 551.3,160.9 551.7,171.1 552.2,181.9 552.7,192.1 553.2,200.3 553.7,205.6 554.1,200.8 554.6,193.4 555.1,184.1 555.5,174.3 556.0,165.0 556.4,157.6 556.9,152.8 557.4,160.0 558.0,171.6 558.5,184.8 559.0,196.4 559.6,203.6 559.9,199.0 560.2,194.4 560.5,199.8 560.8,205.2 561.0,201.1 561.3,196.9 561.8,178.1 562.2,148.0 562.7,118.0 563.2,99.2 563.5,108.2 563.7,117.3 563.9,136.8 564.1,156.3 564.3,136.3 564.5,116.3 564.7,136.3 564.9,156.3 565.1,136.3 565.3,116.4 565.5,136.4 565.7,156.5 565.9,145.7 566.1,134.8 566.6,163.4 567.1,205.6 567.6,234.2 568.1,222.7 568.6,204.5 569.0,182.6 569.5,160.7 570.0,142.6 570.5,131.0 571.0,138.2 571.5,148.9 571.9,162.3 572.4,177.3 572.9,192.2 573.4,205.6 573.8,216.3 574.3,223.5 574.8,213.7 575.3,198.4 575.8,179.9 576.3,161.4 576.8,146.1 577.3,136.3 577.8,142.1 578.2,151.0 578.7,162.0 579.1,173.7 579.6,184.8 580.0,193.6 580.5,199.4 581.0,194.5 581.4,186.9 581.9,177.5 582.4,167.5 582.9,158.1 583.3,150.6 583.8,145.6 584.3,151.2 584.8,159.7 585.3,170.2 585.7,181.5 586.2,192.1 586.7,200.6 587.2,206.1 587.7,201.5 588.1,194.2 588.6,185.3 589.0,175.7 589.5,166.7 589.9,159.5 590.4,154.8 590.9,162.0 591.5,173.4 592.0,186.5 592.6,197.9 593.1,205.0 593.4,200.3 593.7,195.5 594.0,200.7 594.3,205.9 594.6,201.6 594.8,197.3 595.3,178.1 595.8,147.7 596.2,117.3 596.7,98.2 597.0,107.1 597.2,116.0 597.4,135.4 597.6,154.8 597.8,134.7 598.0,114.6 598.2,134.6 598.4,154.5 598.6,134.5 598.8,114.4 599.0,134.5 599.2,154.5 599.4,143.6 599.6,132.8 600.1,161.4 600.6,203.8 601.1,232.4 601.6,221.1 602.1,203.3 602.6,181.7 603.1,160.2 603.5,142.3 604.0,131.0 604.5,138.3 605.0,149.2 605.4,163.0 605.9,178.2 606.4,193.5 606.9,207.2 607.3,218.2 607.8,225.5 608.3,215.7 608.8,200.2 609.3,181.6 609.8,162.9 610.3,147.5 610.8,137.7 611.3,143.2 611.7,151.8 612.2,162.4 612.6,173.8 613.1,184.4 613.6,192.9 614.0,198.5 614.5,193.5 615.0,185.8 615.4,176.2 615.9,165.9 616.4,156.4 616.8,148.6 617.3,143.6 617.8,149.3 618.3,158.0 618.8,168.8 619.3,180.4 619.7,191.2 620.2,199.9 620.7,205.6 621.2,201.1 621.6,194.2 622.1,185.6 622.5,176.3 623.0,167.7 623.5,160.8 623.9,156.3 624.5,163.5 625.0,175.0 625.5,188.2 626.1,199.7 626.6,206.9 626.9,202.1 627.2,197.2 627.5,202.3 627.8,207.4 628.1,203.0 628.3,198.6 628.8,179.2 629.3,148.4 629.8,117.6 630.2,98.2 630.5,107.0 630.7,115.7 630.9,135.0 631.1,154.3 631.3,134.0 631.5,113.8 631.7,133.6 631.9,153.5 632.1,133.3 632.3,113.1 632.5,133.1 632.7,153.0 632.9,142.1 633.1,131.1 633.6,159.7 634.1,201.9 634.6,230.5 635.1,219.2 635.6,201.6 636.1,180.2 636.6,158.8 637.1,141.2 637.5,129.9 638.0,137.4 638.5,148.7 639.0,162.8 639.4,178.4 639.9,194.1 640.4,208.2 640.9,219.4 641.3,226.9 641.8,217.1 642.3,201.8 642.8,183.2 643.3,164.6 643.8,149.3 644.3,139.5 644.8,144.9 645.3,153.3 645.7,163.6 646.2,174.6 646.6,185.0 647.1,193.3 647.5,198.7 648.0,193.5 648.5,185.5 649.0,175.6 649.4,165.0 649.9,155.1 650.4,147.1 650.8,141.9 651.3,147.6 651.8,156.4 652.3,167.3 652.8,178.9 653.3,189.7 653.8,198.5 654.2,204.2 654.7,199.8 655.2,193.2 655.6,184.9 656.1,176.1 656.5,167.8 657.0,161.2 657.4,156.8 658.0,164.2 658.5,176.0 659.1,189.5 659.6,201.3 660.1,208.7 660.4,203.9 660.7,199.1 661.0,204.2 661.3,209.3 661.6,204.8 661.8,200.4 662.3,180.8 662.8,149.8 663.3,118.8 663.8,99.3 664.0,107.9 664.3,116.5 664.5,135.7 664.7,154.8 664.9,134.5 665.1,114.1 665.3,133.8 665.5,153.5 665.7,133.2 665.9,112.9 666.1,132.7 666.3,152.5 666.5,141.4 666.7,130.4 667.2,158.7 667.7,200.6 668.2,228.9 668.6,217.7 669.1,200.0 669.6,178.6 670.1,157.2 670.6,139.5 671.1,128.2 671.5,135.9 672.0,147.4 672.5,161.8 673.0,177.8 673.4,193.8 673.9,208.2 674.4,219.7 674.9,227.3 675.4,217.7 675.9,202.6 676.4,184.3 676.9,166.1 677.4,150.9 677.9,141.3 678.3,146.7 678.8,154.9 679.2,165.1 679.7,176.1 680.1,186.3 680.6,194.5 681.1,199.9 681.5,194.5 682.0,186.2 682.5,176.0 682.9,165.0 683.4,154.7 683.9,146.5 684.4,141.1 684.8,146.7 685.3,155.3 685.8,166.0 686.3,177.5 686.8,188.2 687.3,196.8 687.8,202.4 688.2,198.2 688.7,191.7 689.1,183.6 689.6,175.0 690.0,167.0 690.5,160.5 691.0,156.2 691.5,163.9 692.0,176.0 692.6,190.0 693.1,202.1 693.7,209.8 694.0,205.1 694.3,200.4 694.6,205.7 694.9,210.9 695.1,206.5 695.4,202.1 695.8,182.6 696.3,151.6 696.8,120.5 697.3,101.0 697.5,109.6 697.8,118.1 698.0,137.2 698.2,156.3 698.4,135.8 698.6,115.4 698.8,135.0 699.0,154.6 699.2,134.1 699.4,113.7 699.6,133.4 699.8,153.1 700.0,141.9 700.2,130.7 700.7,158.8 701.2,200.2 701.7,228.3 702.2,216.9 702.6,199.0 703.1,177.3 703.6,155.7 704.1,137.8 704.6,126.4 705.1,134.1 705.5,145.7 706.0,160.3 706.5,176.5 707.0,192.7 707.4,207.3 707.9,218.9 708.4,226.6 708.9,217.2 709.4,202.5 709.9,184.6 710.4,166.7 710.9,151.9 711.4,142.5 711.8,147.9 712.3,156.2 712.8,166.6 713.2,177.6 713.7,187.9 714.1,196.2 714.6,201.6 715.1,196.1 715.5,187.6 716.0,177.1 716.5,165.9 716.9,155.3 717.4,146.9 717.9,141.3 718.4,146.8 718.9,155.1 719.3,165.5 719.8,176.6 720.3,187.0 720.8,195.4 721.3,200.8 721.7,196.6 722.2,190.1 722.7,182.1 723.1,173.5 723.6,165.4 724.0,159.0 724.5,154.8 725.0,162.6 725.6,175.1 726.1,189.4 726.6,202.0 727.2,209.8 727.5,205.3 727.8,200.9 728.1,206.3 728.4,211.7 728.6,207.4 728.9,203.2 729.4,183.8 729.8,153.0 730.3,122.2 730.8,102.9 731.1,111.4 731.3,120.0 731.5,139.1 731.7,158.2 731.9,137.7 732.1,117.2 732.3,136.8 732.5,156.3 732.7,135.9 732.9,115.4 733.1,135.0 733.3,154.6 733.5,143.3 733.7,132.1 734.2,159.8 734.7,200.9 735.2,228.7 735.7,217.1 736.2,198.9 736.7,176.9 737.1,154.8 737.6,136.6 738.1,125.0 738.6,132.7 739.1,144.3 739.5,158.9 740.0,175.1 740.5,191.2 741.0,205.8 741.4,217.4 741.9,225.1 742.4,215.9 742.9,201.4 743.4,183.9 743.9,166.4 744.4,151.9 744.9,142.7 745.4,148.3 745.8,156.8 746.3,167.4 746.7,178.7 747.2,189.3 747.6,197.8 748.1,203.4 748.6,197.8 749.0,189.3 749.5,178.7 750.0,167.3 750.5,156.7 750.9,148.2 751.4,142.6 751.9,147.8 752.4,155.9 752.9,165.9 753.3,176.6 753.8,186.6 754.3,194.7 754.8,199.9 755.3,195.6 755.7,189.0 756.2,180.8 756.6,172.0 757.1,163.8 757.5,157.2 758.0,152.8 758.5,160.8 759.1,173.5 759.6,188.1 760.2,200.8 760.7,208.8 761.0,204.5 761.3,200.2 761.6,205.8 761.9,211.4 762.2,207.3 762.4,203.3 762.9,184.1 763.4,153.7 763.8,123.3 764.3,104.2 764.6,112.9 764.8,121.5 765.0,140.7 765.2,159.9 765.4,139.5 765.6,119.0 765.8,138.6 766.0,158.2 766.2,137.8 766.4,117.4 766.6,137.0 766.8,156.6 767.0,145.3 767.2,134.0 767.7,161.6 768.2,202.5 768.7,230.2 769.2,218.3 769.7,199.8 770.2,177.4 770.7,154.9 771.1,136.4 771.6,124.6 772.1,132.2 772.6,143.6 773.0,157.9 773.5,173.8 774.0,189.8 774.5,204.1 774.9,215.5 775.4,223.1 775.9,214.0 776.4,199.8 776.9,182.5 777.4,165.2 777.9,150.9 778.4,141.8 778.9,147.5 779.3,156.4 779.8,167.3 780.2,179.1 780.7,190.0 781.2,198.8 781.6,204.6 782.1,199.1 782.6,190.6 783.0,180.2 783.5,168.9 784.0,158.5 784.4,150.0 784.9,144.5 785.4,149.6 785.9,157.4 786.4,167.1 786.9,177.5 787.3,187.2 787.8,195.1 788.3,200.1 788.8,195.7 789.2,188.8 789.7,180.2 790.1,171.0 790.6,162.5 791.1,155.6 791.5,151.1 792.1,159.0 792.6,171.7 793.1,186.3 793.7,199.0 794.2,206.9 794.5,202.8 794.8,198.6 795.1,204.4 795.4,210.1 795.7,206.2 795.9,202.3 796.4,183.4 796.9,153.4 797.4,123.4 797.8,104.6 798.1,113.4 798.3,122.3 798.5,141.6 798.7,160.9 798.9,140.6 799.1,120.3 799.3,140.0 799.5,159.7 799.7,139.4 799.9,119.1 800.1,138.7 800.3,158.4 800.5,147.2 800.7,135.9 801.2,163.6 801.7,204.5 802.2,232.2 802.7,220.2 803.2,201.4 803.7,178.7 804.2,156.0 804.7,137.2 805.1,125.2 805.6,132.6 806.1,143.8 806.6,157.8 807.0,173.3 807.5,188.8 808.0,202.8 808.5,214.0 808.9,221.4 809.4,212.3 809.9,198.0 810.4,180.7 810.9,163.4 811.4,149.1 811.9,140.0 812.4,146.0 812.9,155.1 813.3,166.4 813.8,178.5 814.2,189.8 814.7,198.9 815.1,204.8 815.6,199.5 816.1,191.3 816.6,181.1 817.0,170.2 817.5,160.0 818.0,151.8 818.4,146.5 818.9,151.5 819.4,159.2 819.9,168.8 820.4,179.1 820.9,188.7 821.4,196.4 821.8,201.4 822.3,196.7 822.8,189.5 823.2,180.5 823.7,170.9 824.1,161.9 824.6,154.7 825.0,150.0 825.6,157.8 826.1,170.3 826.7,184.5 827.2,197.0 827.7,204.8 828.0,200.6 828.3,196.5 828.6,202.3 828.9,208.1 829.2,204.3 829.4,200.4 829.9,181.8 830.4,152.2 830.9,122.5 831.4,103.9 831.6,112.9 831.9,122.0 832.1,141.5 832.3,160.9 832.5,140.8 832.7,120.6 832.9,140.5 833.1,160.3 833.3,140.1 833.5,119.9 833.7,139.8 833.9,159.6 834.1,148.5 834.3,137.3 834.8,165.2 835.3,206.3 835.8,234.2 836.2,222.2 836.7,203.3 837.2,180.5 837.7,157.7 838.2,138.8 838.7,126.8 839.1,134.0 839.6,144.8 840.1,158.4 840.6,173.6 841.0,188.7 841.5,202.3 842.0,213.1 842.5,220.3 843.0,211.1 843.5,196.7 844.0,179.1 844.5,161.6 845.0,147.2 845.5,137.9 845.9,144.0 846.4,153.3 846.8,164.8 847.3,177.1 847.7,188.6 848.2,197.9 848.7,204.0 849.1,198.8 849.6,191.0 850.1,181.2 850.5,170.8 851.0,161.0 851.5,153.1 852.0,148.0 852.4,153.1 852.9,160.9 853.4,170.5 853.9,180.9 854.4,190.5 854.9,198.3 855.4,203.4 855.8,198.5 856.3,191.0 856.7,181.7 857.2,171.7 857.6,162.4 858.1,154.9 858.6,150.0 859.1,157.5 859.6,169.6 860.2,183.3 860.7,195.4 861.3,202.9 861.6,198.7 861.9,194.4 862.2,200.2 862.5,206.0 862.7,202.1 863.0,198.3 863.4,179.8 863.9,150.3 864.4,120.8 864.9,102.3 865.1,111.5 865.4,120.7 865.6,140.3 865.8,159.9 866.0,139.9 866.2,119.9 866.4,139.9 866.6,159.9 866.8,139.8 867.0,119.8 867.2,139.8 867.4,159.7 867.6,148.8 867.8,137.8 868.3,165.9 868.8,207.5 869.3,235.6 869.8,223.7 870.2,204.9 870.7,182.2 871.2,159.5 871.7,140.8 872.2,128.8 872.7,135.9 873.1,146.5 873.6,159.8 874.1,174.6 874.6,189.4 875.0,202.7 875.5,213.3 876.0,220.4 876.5,210.9 877.0,196.1 877.5,178.2 878.0,160.3 878.5,145.5 879.0,136.1 879.4,142.1 879.9,151.4 880.4,163.0 880.8,175.3 881.3,186.9 881.7,196.2 882.2,202.2 882.7,197.3 883.1,189.8 883.6,180.4 884.1,170.4 884.5,161.0 885.0,153.5 885.5,148.6 886.0,153.8 886.5,161.8 886.9,171.7 887.4,182.4 887.9,192.3 888.4,200.3 888.9,205.5 889.3,200.5 889.8,192.9 890.3,183.3 890.7,173.2 891.2,163.6 891.6,156.0 892.1,151.0 892.6,158.2 893.2,169.8 893.7,183.1 894.2,194.7 894.8,201.9 895.1,197.5 895.4,193.0 895.7,198.6 896.0,204.3 896.2,200.3 896.5,196.4 897.0,177.8 897.4,148.3 897.9,118.8 898.4,100.2 898.7,109.5 898.9,118.7 899.1,138.4 899.3,158.1 899.5,138.2 899.7,118.2 899.9,138.4 900.1,158.5 900.3,138.5 900.5,118.6 900.7,138.7 900.9,158.8 901.1,148.0 901.3,137.2 901.8,165.6 902.3,207.7 902.8,236.1 903.3,224.3 903.8,205.8 904.2,183.5 904.7,161.1 905.2,142.6 905.7,130.8 906.2,137.8 906.7,148.3 907.1,161.5 907.6,176.1 908.1,190.7 908.6,203.9 909.0,214.4 909.5,221.4 910.0,211.7 910.5,196.5 911.0,178.2 911.5,159.8 912.0,144.6 912.5,135.0 913.0,140.9 913.4,150.1 913.9,161.5 914.3,173.6 914.8,185.0 915.2,194.2 915.7,200.2 916.2,195.4 916.6,188.1 917.1,179.0 917.6,169.2 918.1,160.2 918.5,152.8 919.0,148.1 919.5,153.5 920.0,161.8 920.5,172.2 920.9,183.2 921.4,193.5 921.9,201.9 922.4,207.3 922.9,202.3 923.3,194.6 923.8,185.1 924.2,174.9 924.7,165.4 925.1,157.7 925.6,152.7 926.1,159.7 926.7,170.9 927.2,183.7 927.8,195.0 928.3,202.0 928.6,197.3 928.9,192.6 929.2,198.0 929.5,203.4 929.8,199.3 930.0,195.2 930.5,176.5 931.0,146.8 931.4,117.0 931.9,98.3 932.2,107.5 932.4,116.7 932.6,136.4 932.8,156.1 933.0,136.2 933.2,116.2 933.4,136.4 933.6,156.5 933.8,136.7 934.0,116.8 934.2,137.0 934.4,157.2 934.6,146.4 934.8,135.7 935.3,164.4 935.8,206.8 936.3,235.5 936.8,224.0 937.3,205.8 937.8,183.8 938.3,161.9 938.7,143.7 939.2,132.2 939.7,139.2 940.2,149.7 940.6,163.0 941.1,177.6 941.6,192.3 942.1,205.6 942.5,216.1 943.0,223.1 943.5,213.3 944.0,197.8 944.5,179.0 945.0,160.3 945.5,144.8 946.0,134.9 946.5,140.7 946.9,149.6 947.4,160.7 947.8,172.5 948.3,183.6 948.8,192.5 949.2,198.3 949.7,193.6 950.2,186.3 950.6,177.3 951.1,167.6 951.6,158.6 952.0,151.4 952.5,146.7 953.0,152.3 953.5,160.9 954.0,171.7 954.5,183.2 954.9,193.9 955.4,202.5 955.9,208.2 956.4,203.3 956.8,195.8 957.3,186.4 957.7,176.4 958.2,167.1 958.7,159.6 959.1,154.7 959.7,161.6 960.2,172.6 960.7,185.1 961.3,196.1 961.8,203.0 962.1,198.2 962.4,193.3 962.7,198.5 963.0,203.7 963.3,199.4 963.5,195.2 964.0,176.2 964.5,146.1 965.0,116.0 965.4,97.0 965.7,106.1 965.9,115.2 966.1,134.8 966.3,154.4 966.5,134.4 966.7,114.5 966.9,134.6 967.1,154.7 967.3,134.8 967.5,114.9 967.7,135.1 967.9,155.2 968.1,144.5 968.3,133.8 968.8,162.6 969.3,205.2 969.8,234.1 970.3,222.7 970.8,204.9 971.3,183.3 971.8,161.7 972.3,143.8 972.7,132.5 973.2,139.6 973.7,150.3 974.2,163.8 974.6,178.8 975.1,193.7 975.6,207.2 976.1,217.9 976.5,225.1 977.0,215.1 977.5,199.4 978.0,180.5 978.5,161.6 979.0,145.9 979.5,135.9 980.0,141.5 980.5,150.1 980.9,160.8 981.4,172.3 981.8,182.9 982.3,191.6 982.7,197.2 983.2,192.4 983.7,185.0 984.2,175.9 984.6,166.1 985.1,156.9 985.6,149.6 986.0,144.8 986.5,150.6 987.0,159.4 987.5,170.5 988.0,182.3 988.5,193.3 989.0,202.2 989.4,208.0 989.9,203.2 990.4,196.0 990.8,187.0 991.3,177.3 991.7,168.3 992.2,161.0 992.6,156.3 993.2,163.2 993.7,174.2 994.3,186.8 994.8,197.8 995.3,204.7 995.6,199.8 995.9,194.8 996.2,199.9 996.5,204.9 996.8,200.5 997.0,196.1 997.5,177.0 998.0,146.5 998.5,116.0 999.0,96.8 999.2,105.7 999.5,114.7 999.7,134.1 999.9,153.6 1000.1,133.5 1000.3,113.5 1000.5,133.5 1000.7,153.5 1000.9,133.5 1001.1,113.5 1001.3,133.6 1001.5,153.7 1001.7,142.9 1001.9,132.1 1002.4,160.9 1002.9,203.5 1003.4,232.2 1003.8,221.0 1004.3,203.3 1004.8,182.0 1005.3,160.6 1005.8,143.0 1006.3,131.7 1006.7,139.0 1007.2,150.0 1007.7,163.8 1008.2,179.1 1008.6,194.5 1009.1,208.3 1009.6,219.3 1010.1,226.6 1010.6,216.6 1011.1,201.0 1011.6,182.1 1012.1,163.2 1012.6,147.6 1013.1,137.6 1013.5,143.1 1014.0,151.4 1014.4,161.8 1014.9,172.9 1015.3,183.3 1015.8,191.7 1016.3,197.1 1016.7,192.2 1017.2,184.6 1017.7,175.1 1018.1,165.0 1018.6,155.6 1019.1,148.0 1019.6,143.0 1020.0,148.9 1020.5,157.8 1021.0,169.0 1021.5,180.9 1022.0,192.0 1022.5,200.9 1023.0,206.8 1023.4,202.2 1023.9,195.2 1024.3,186.5 1024.8,177.3 1025.2,168.6 1025.7,161.6 1026.2,157.0 1026.6,162.6 1027.1,171.2 1027.5,181.8 1028.0,192.3 1028.4,200.9 1028.9,206.5 1029.2,201.5 1029.5,196.6 1029.8,201.7 1030.1,206.7 1030.3,202.2 1030.6,197.8 1031.0,178.5 1031.5,147.7 1032.0,117.0 1032.5,97.7 1032.7,106.4 1033.0,115.2 1033.2,134.6 1033.4,153.9 1033.6,133.7 1033.8,113.5 1034.0,133.4 1034.2,153.3 1034.4,133.1 1034.6,113.0 1034.8,133.0 1035.0,153.0 1035.2,142.1 1035.4,131.2 1035.9,159.8 1036.4,202.0 1036.9,230.6 1037.4,219.4 1037.8,201.7 1038.3,180.4 1038.8,159.0 1039.3,141.4 1039.8,130.1 1040.3,137.6 1040.7,148.9 1041.2,163.0 1041.7,178.7 1042.2,194.3 1042.6,208.5 1043.1,219.7 1043.6,227.2 1044.1,217.4 1044.6,202.0 1045.1,183.3 1045.6,164.7 1046.1,149.3 1046.6,139.5 1047.0,144.8 1047.5,153.1 1048.0,163.3 1048.4,174.3 1048.9,184.5 1049.3,192.7 1049.8,198.1 1050.3,193.0 1050.7,185.1 1051.2,175.3 1051.7,164.8 1052.1,155.0 1052.6,147.1 1053.1,142.0 1053.6,147.8 1054.1,156.6 1054.5,167.6 1055.0,179.4 1055.5,190.4 1056.0,199.2 1056.5,205.0 1056.9,200.6 1057.4,193.8 1057.9,185.4 1058.3,176.3 1058.8,167.9 1059.2,161.1 1059.7,156.7 1060.1,162.4 1060.6,171.4 1061.0,182.2 1061.5,193.1 1061.9,202.0 1062.4,207.7 1062.7,202.9 1063.0,198.1 1063.3,203.3 1063.6,208.4 1063.8,204.0 1064.1,199.6 1064.6,180.2 1065.0,149.4 1065.5,118.7 1066.0,99.3 1066.3,108.0 1066.5,116.7 1066.7,136.0 1066.9,155.2 1067.1,134.9 1067.3,114.6 1067.5,134.4 1067.7,154.1 1067.9,133.9 1068.1,113.7 1068.3,133.5 1068.5,153.4 1068.7,142.3 1068.9,131.3 1069.4,159.6 1069.9,201.4 1070.4,229.8 1070.9,218.4 1071.4,200.6 1071.9,179.0 1072.3,157.4 1072.8,139.6 1073.3,128.2 1073.8,135.8 1074.3,147.2 1074.7,161.6 1075.2,177.5 1075.7,193.4 1076.2,207.7 1076.6,219.1 1077.1,226.7 1077.6,217.1 1078.1,202.1 1078.6,183.8 1079.1,165.6 1079.6,150.5 1080.1,140.9 1080.6,146.3 1081.0,154.6 1081.5,164.9 1081.9,175.9 1082.4,186.2 1082.8,194.5 1083.3,199.9 1083.8,194.6 1084.2,186.4 1084.7,176.3 1085.2,165.5 1085.7,155.4 1086.1,147.3 1086.6,142.0 1087.1,147.6 1087.6,156.2 1088.1,166.9 1088.5,178.3 1089.0,189.0 1089.5,197.6 1090.0,203.2 1090.5,198.8 1090.9,192.1 1091.4,183.7 1091.8,174.8 1092.3,166.4 1092.7,159.7 1093.2,155.3 1093.7,161.2 1094.1,170.5 1094.6,181.7 1095.0,192.9 1095.5,202.2 1095.9,208.1 1096.2,203.5 1096.5,198.8 1096.8,204.2 1097.1,209.5 1097.4,205.2 1097.6,201.0 1098.1,181.7 1098.6,151.1 1099.0,120.5 1099.5,101.3 1099.8,110.0 1100.0,118.7 1100.2,137.9 1100.4,157.2 1100.6,136.8 1100.8,116.5 1101.0,136.2 1101.2,155.9 1101.4,135.6 1101.6,115.2 1101.8,135.0 1102.0,154.8 1102.2,143.6 1102.4,132.5 1102.9,160.5 1103.4,201.9 1103.9,229.9 1104.4,218.4 1104.9,200.2 1105.4,178.2 1105.9,156.3" fill="none" stroke="#fff" stroke-width=".95" stroke-opacity=".94" stroke-linejoin="round"/></svg><div class="a" style="left:1101.0px;top:19.799999999999997px;width:1px;height:166.2px;background:#e9e9e9"></div><div class="a" style="left:47.0px;top:185.0px;width:1055.0px;height:1px;background:#cfcfcf"></div><span id="ty0" class="t" style="left:40.0px;transform-origin:0 0;top:15.9px;font-size:10px;line-height:11.81px;color:#1e1e1e;font-weight:normal;transform:translateX(-100%) scaleX(1.000);transform-origin:100% 0;">-1.2</span><span id="ty1" class="t" style="left:40.0px;transform-origin:0 0;top:34.1px;font-size:10px;line-height:11.81px;color:#1e1e1e;font-weight:normal;transform:translateX(-100%) scaleX(1.000);transform-origin:100% 0;">-1.4</span><span id="ty2" class="t" style="left:40.0px;transform-origin:0 0;top:52.3px;font-size:10px;line-height:11.81px;color:#1e1e1e;font-weight:normal;transform:translateX(-100%) scaleX(1.000);transform-origin:100% 0;">-1.6</span><span id="ty3" class="t" style="left:40.0px;transform-origin:0 0;top:70.5px;font-size:10px;line-height:11.81px;color:#1e1e1e;font-weight:normal;transform:translateX(-100%) scaleX(1.000);transform-origin:100% 0;">-1.8</span><span id="ty4" class="t" style="left:40.0px;transform-origin:0 0;top:88.7px;font-size:10px;line-height:11.81px;color:#1e1e1e;font-weight:normal;transform:translateX(-100%) scaleX(1.000);transform-origin:100% 0;">-2</span><span id="ty5" class="t" style="left:40.0px;transform-origin:0 0;top:106.9px;font-size:10px;line-height:11.81px;color:#1e1e1e;font-weight:normal;transform:translateX(-100%) scaleX(1.000);transform-origin:100% 0;">-2.2</span><span id="ty6" class="t" style="left:40.0px;transform-origin:0 0;top:125.1px;font-size:10px;line-height:11.81px;color:#1e1e1e;font-weight:normal;transform:translateX(-100%) scaleX(1.000);transform-origin:100% 0;">-2.4</span><span id="ty7" class="t" style="left:40.0px;transform-origin:0 0;top:143.3px;font-size:10px;line-height:11.81px;color:#1e1e1e;font-weight:normal;transform:translateX(-100%) scaleX(1.000);transform-origin:100% 0;">-2.6</span><span id="ty8" class="t" style="left:40.0px;transform-origin:0 0;top:161.5px;font-size:10px;line-height:11.81px;color:#1e1e1e;font-weight:normal;transform:translateX(-100%) scaleX(1.000);transform-origin:100% 0;">-2.8</span><span id="ty9" class="t" style="left:40.0px;transform-origin:0 0;top:179.7px;font-size:10px;line-height:11.81px;color:#1e1e1e;font-weight:normal;transform:translateX(-100%) scaleX(1.000);transform-origin:100% 0;">-3</span><span id="tx0" class="t" style="left:48.0px;top:192.6px;font-size:10px;line-height:11.81px;color:#1e1e1e;font-weight:normal;transform:translateX(-50%) scaleX(0.970);transform-origin:50% 0;">0</span><span id="tx1" class="t" style="left:74.3px;top:192.6px;font-size:10px;line-height:11.81px;color:#1e1e1e;font-weight:normal;transform:translateX(-50%) scaleX(0.940);transform-origin:50% 0;">0.025</span><span id="tx2" class="t" style="left:100.6px;top:192.6px;font-size:10px;line-height:11.81px;color:#1e1e1e;font-weight:normal;transform:translateX(-50%) scaleX(0.940);transform-origin:50% 0;">0.05</span><span id="tx3" class="t" style="left:126.9px;top:192.6px;font-size:10px;line-height:11.81px;color:#1e1e1e;font-weight:normal;transform:translateX(-50%) scaleX(0.940);transform-origin:50% 0;">0.075</span><span id="tx4" class="t" style="left:153.2px;top:192.6px;font-size:10px;line-height:11.81px;color:#1e1e1e;font-weight:normal;transform:translateX(-50%) scaleX(0.970);transform-origin:50% 0;">0.1</span><span id="tx5" class="t" style="left:179.5px;top:192.6px;font-size:10px;line-height:11.81px;color:#1e1e1e;font-weight:normal;transform:translateX(-50%) scaleX(0.940);transform-origin:50% 0;">0.125</span><span id="tx6" class="t" style="left:205.8px;top:192.6px;font-size:10px;line-height:11.81px;color:#1e1e1e;font-weight:normal;transform:translateX(-50%) scaleX(0.940);transform-origin:50% 0;">0.15</span><span id="tx7" class="t" style="left:232.1px;top:192.6px;font-size:10px;line-height:11.81px;color:#1e1e1e;font-weight:normal;transform:translateX(-50%) scaleX(0.940);transform-origin:50% 0;">0.175</span><span id="tx8" class="t" style="left:258.4px;top:192.6px;font-size:10px;line-height:11.81px;color:#1e1e1e;font-weight:normal;transform:translateX(-50%) scaleX(0.970);transform-origin:50% 0;">0.2</span><span id="tx9" class="t" style="left:284.7px;top:192.6px;font-size:10px;line-height:11.81px;color:#1e1e1e;font-weight:normal;transform:translateX(-50%) scaleX(0.940);transform-origin:50% 0;">0.225</span><span id="tx10" class="t" style="left:311.0px;top:192.6px;font-size:10px;line-height:11.81px;color:#1e1e1e;font-weight:normal;transform:translateX(-50%) scaleX(0.940);transform-origin:50% 0;">0.25</span><span id="tx11" class="t" style="left:337.3px;top:192.6px;font-size:10px;line-height:11.81px;color:#1e1e1e;font-weight:normal;transform:translateX(-50%) scaleX(0.940);transform-origin:50% 0;">0.275</span><span id="tx12" class="t" style="left:363.6px;top:192.6px;font-size:10px;line-height:11.81px;color:#1e1e1e;font-weight:normal;transform:translateX(-50%) scaleX(0.970);transform-origin:50% 0;">0.3</span><span id="tx13" class="t" style="left:389.9px;top:192.6px;font-size:10px;line-height:11.81px;color:#1e1e1e;font-weight:normal;transform:translateX(-50%) scaleX(0.940);transform-origin:50% 0;">0.325</span><span id="tx14" class="t" style="left:416.2px;top:192.6px;font-size:10px;line-height:11.81px;color:#1e1e1e;font-weight:normal;transform:translateX(-50%) scaleX(0.940);transform-origin:50% 0;">0.35</span><span id="tx15" class="t" style="left:442.5px;top:192.6px;font-size:10px;line-height:11.81px;color:#1e1e1e;font-weight:normal;transform:translateX(-50%) scaleX(0.940);transform-origin:50% 0;">0.375</span><span id="tx16" class="t" style="left:468.8px;top:192.6px;font-size:10px;line-height:11.81px;color:#1e1e1e;font-weight:normal;transform:translateX(-50%) scaleX(0.970);transform-origin:50% 0;">0.4</span><span id="tx17" class="t" style="left:495.1px;top:192.6px;font-size:10px;line-height:11.81px;color:#1e1e1e;font-weight:normal;transform:translateX(-50%) scaleX(0.940);transform-origin:50% 0;">0.425</span><span id="tx18" class="t" style="left:521.4px;top:192.6px;font-size:10px;line-height:11.81px;color:#1e1e1e;font-weight:normal;transform:translateX(-50%) scaleX(0.940);transform-origin:50% 0;">0.45</span><span id="tx19" class="t" style="left:547.7px;top:192.6px;font-size:10px;line-height:11.81px;color:#1e1e1e;font-weight:normal;transform:translateX(-50%) scaleX(0.940);transform-origin:50% 0;">0.475</span><span id="tx20" class="t" style="left:574.0px;top:192.6px;font-size:10px;line-height:11.81px;color:#1e1e1e;font-weight:normal;transform:translateX(-50%) scaleX(0.970);transform-origin:50% 0;">0.5</span><span id="tx21" class="t" style="left:600.3px;top:192.6px;font-size:10px;line-height:11.81px;color:#1e1e1e;font-weight:normal;transform:translateX(-50%) scaleX(0.940);transform-origin:50% 0;">0.525</span><span id="tx22" class="t" style="left:626.6px;top:192.6px;font-size:10px;line-height:11.81px;color:#1e1e1e;font-weight:normal;transform:translateX(-50%) scaleX(0.940);transform-origin:50% 0;">0.55</span><span id="tx23" class="t" style="left:652.9px;top:192.6px;font-size:10px;line-height:11.81px;color:#1e1e1e;font-weight:normal;transform:translateX(-50%) scaleX(0.940);transform-origin:50% 0;">0.575</span><span id="tx24" class="t" style="left:679.2px;top:192.6px;font-size:10px;line-height:11.81px;color:#1e1e1e;font-weight:normal;transform:translateX(-50%) scaleX(0.970);transform-origin:50% 0;">0.6</span><span id="tx25" class="t" style="left:705.5px;top:192.6px;font-size:10px;line-height:11.81px;color:#1e1e1e;font-weight:normal;transform:translateX(-50%) scaleX(0.940);transform-origin:50% 0;">0.625</span><span id="tx26" class="t" style="left:731.8px;top:192.6px;font-size:10px;line-height:11.81px;color:#1e1e1e;font-weight:normal;transform:translateX(-50%) scaleX(0.940);transform-origin:50% 0;">0.65</span><span id="tx27" class="t" style="left:758.1px;top:192.6px;font-size:10px;line-height:11.81px;color:#1e1e1e;font-weight:normal;transform:translateX(-50%) scaleX(0.940);transform-origin:50% 0;">0.675</span><span id="tx28" class="t" style="left:784.4px;top:192.6px;font-size:10px;line-height:11.81px;color:#1e1e1e;font-weight:normal;transform:translateX(-50%) scaleX(0.970);transform-origin:50% 0;">0.7</span><span id="tx29" class="t" style="left:810.7px;top:192.6px;font-size:10px;line-height:11.81px;color:#1e1e1e;font-weight:normal;transform:translateX(-50%) scaleX(0.940);transform-origin:50% 0;">0.725</span><span id="tx30" class="t" style="left:837.0px;top:192.6px;font-size:10px;line-height:11.81px;color:#1e1e1e;font-weight:normal;transform:translateX(-50%) scaleX(0.940);transform-origin:50% 0;">0.75</span><span id="tx31" class="t" style="left:863.3px;top:192.6px;font-size:10px;line-height:11.81px;color:#1e1e1e;font-weight:normal;transform:translateX(-50%) scaleX(0.940);transform-origin:50% 0;">0.775</span><span id="tx32" class="t" style="left:889.6px;top:192.6px;font-size:10px;line-height:11.81px;color:#1e1e1e;font-weight:normal;transform:translateX(-50%) scaleX(0.970);transform-origin:50% 0;">0.8</span><span id="tx33" class="t" style="left:915.9px;top:192.6px;font-size:10px;line-height:11.81px;color:#1e1e1e;font-weight:normal;transform:translateX(-50%) scaleX(0.940);transform-origin:50% 0;">0.825</span><span id="tx34" class="t" style="left:942.2px;top:192.6px;font-size:10px;line-height:11.81px;color:#1e1e1e;font-weight:normal;transform:translateX(-50%) scaleX(0.940);transform-origin:50% 0;">0.85</span><span id="tx35" class="t" style="left:968.5px;top:192.6px;font-size:10px;line-height:11.81px;color:#1e1e1e;font-weight:normal;transform:translateX(-50%) scaleX(0.940);transform-origin:50% 0;">0.875</span><span id="tx36" class="t" style="left:994.8px;top:192.6px;font-size:10px;line-height:11.81px;color:#1e1e1e;font-weight:normal;transform:translateX(-50%) scaleX(0.970);transform-origin:50% 0;">0.9</span><span id="tx37" class="t" style="left:1021.1px;top:192.6px;font-size:10px;line-height:11.81px;color:#1e1e1e;font-weight:normal;transform:translateX(-50%) scaleX(0.940);transform-origin:50% 0;">0.925</span><span id="tx38" class="t" style="left:1047.4px;top:192.6px;font-size:10px;line-height:11.81px;color:#1e1e1e;font-weight:normal;transform:translateX(-50%) scaleX(0.940);transform-origin:50% 0;">0.95</span><span id="tx39" class="t" style="left:1073.7px;top:192.6px;font-size:10px;line-height:11.81px;color:#1e1e1e;font-weight:normal;transform:translateX(-50%) scaleX(0.940);transform-origin:50% 0;">0.975</span><span id="tx40" class="t" style="left:1100.0px;top:192.6px;font-size:10px;line-height:11.81px;color:#1e1e1e;font-weight:normal;transform:translateX(-50%) scaleX(0.970);transform-origin:50% 0;">1</span><svg style="left:0;top:0" width="1174" height="560" viewBox="2 61 1174 560"><path d="M44.3 81.80H48M44.3 100.00H48M44.3 118.20H48M44.3 136.40H48M44.3 154.60H48M44.3 172.80H48M44.3 191.00H48M44.3 209.20H48M44.3 227.40H48M44.3 245.60H48M50.00 248.2V252.4M76.30 248.2V252.4M102.60 248.2V252.4M128.90 248.2V252.4M155.20 248.2V252.4M181.50 248.2V252.4M207.80 248.2V252.4M234.10 248.2V252.4M260.40 248.2V252.4M286.70 248.2V252.4M313.00 248.2V252.4M339.30 248.2V252.4M365.60 248.2V252.4M391.90 248.2V252.4M418.20 248.2V252.4M444.50 248.2V252.4M470.80 248.2V252.4M497.10 248.2V252.4M523.40 248.2V252.4M549.70 248.2V252.4M576.00 248.2V252.4M602.30 248.2V252.4M628.60 248.2V252.4M654.90 248.2V252.4M681.20 248.2V252.4M707.50 248.2V252.4M733.80 248.2V252.4M760.10 248.2V252.4M786.40 248.2V252.4M812.70 248.2V252.4M839.00 248.2V252.4M865.30 248.2V252.4M891.60 248.2V252.4M917.90 248.2V252.4M944.20 248.2V252.4M970.50 248.2V252.4M996.80 248.2V252.4M1023.10 248.2V252.4M1049.40 248.2V252.4M1075.70 248.2V252.4M1102.00 248.2V252.4" stroke="#222" stroke-width="1.1" fill="none"/></svg><span id="time" class="t" style="left:574.2px;top:207.8px;font-size:10px;line-height:11.81px;color:#1e1e1e;font-weight:normal;transform:translateX(-50%) scaleX(1.060);transform-origin:50% 0;">Time</span><span id="amp1" class="t" style="left:12.8px;top:102.4px;font-size:10.6px;line-height:10.6px;color:#1e1e1e;will-change:auto;transform:translate(-50%,-50%) rotate(-90deg)">Amplitude</span><span id="numl" class="t" style="left:327.1px;transform-origin:0 0;top:228.5px;font-size:10px;line-height:11.81px;color:#1e1e1e;font-weight:normal;transform:scaleX(1.045);">Numeric</span><div class="a" style="left:325.8px;top:243.5px;width:46.8px;height:20.5px;box-sizing:border-box;background:#dcdcdc;border-style:solid;border-width:2px 3px 3px 2px;border-color:#a9a9a9 #f6f6f6 #f6f6f6 #b0b0b0;overflow:hidden"></div><div class="a" style="left:328px;top:245.5px;width:40.3px;height:15.5px;overflow:hidden"><span id="numv" class="t" style="left:3.6px;transform-origin:0 0;top:2.3px;font-size:10px;line-height:11.81px;color:#1e1e1e;font-weight:normal;transform:scaleX(0.988);">-2.20909</span></div><span id="wfg" class="t" style="left:76.2px;transform-origin:0 0;top:259.8px;font-size:10px;line-height:11.81px;color:#1e1e1e;font-weight:normal;transform:translateX(-100%) scaleX(1.050);transform-origin:100% 0;">Waveform Graph</span><div class="a" style="left:980.3px;top:253.3px;width:141.2px;height:19px;box-sizing:border-box;background:linear-gradient(to right,#c6c6c6 0,#c1c1c1 88%,#8c8c8c 100%);border-bottom:1px solid #909090;border-top:1px solid #e3e3e3"></div><div class="a" style="left:1084.6px;top:254.8px;width:24.7px;height:14.5px;background:#000"></div><svg style="left:1084.6px;top:254.8px" width="25" height="15" viewBox="0 0 25 15"><path d="M1.5 12.6L9 3.4l5 8.2 8.6-8.6" stroke="#fff" stroke-width="1" fill="none"/></svg><span id="leg2" class="t" style="left:992.8px;transform-origin:0 0;top:257.1px;font-size:10px;line-height:11.81px;color:#1e1e1e;font-weight:normal;transform:scaleX(0.977);">Ch0 (FFT - (RMS))</span><div class="a" style="left:-12px;top:275.3px;width:1134px;height:241.2px;background:#c1c1c1;background-image:linear-gradient(to right,rgba(0,0,0,0) 0,rgba(0,0,0,0) 1121px,rgba(0,0,0,.10) 1126px,rgba(0,0,0,.42) 1134px),linear-gradient(to bottom,#d8d8d8 0,#d0d0d0 3px,#cacaca 9px,#c8c8c8 14px,#c0c0c0 100%);box-shadow:inset 0 -1px 0 #9a9a9a,inset 0 -2px 0 #b4b4b4"></div><svg style="left:53.0px;top:283.4px" width="1048.3" height="195.9" viewBox="55.0 344.4 1048.3 195.9"><rect x="55.0" y="344.4" width="1048.3" height="195.9" fill="#000"/><path d="M55.0 350.19H1103.3M55.0 355.77H1103.3M55.0 361.36H1103.3M55.0 366.94H1103.3M55.0 378.12H1103.3M55.0 383.70H1103.3M55.0 389.29H1103.3M55.0 394.87H1103.3M55.0 406.05H1103.3M55.0 411.63H1103.3M55.0 417.22H1103.3M55.0 422.80H1103.3M55.0 433.98H1103.3M55.0 439.56H1103.3M55.0 445.15H1103.3M55.0 450.73H1103.3M55.0 461.91H1103.3M55.0 467.49H1103.3M55.0 473.08H1103.3M55.0 478.66H1103.3M55.0 489.84H1103.3M55.0 495.42H1103.3M55.0 501.01H1103.3M55.0 506.59H1103.3M55.0 517.77H1103.3M55.0 523.35H1103.3M55.0 528.94H1103.3M55.0 534.52H1103.3" stroke="#11311a" stroke-width=".9" fill="none"/><path d="M106.74 344.4V540.3M150.49 344.4V540.3M188.39 344.4V540.3M221.82 344.4V540.3M448.45 344.4V540.3M563.52 344.4V540.3M645.17 344.4V540.3M708.50 344.4V540.3M760.24 344.4V540.3M803.99 344.4V540.3M841.89 344.4V540.3M875.32 344.4V540.3" stroke="#163e1f" stroke-width=".9" fill="none"/><path d="M55.0 372.53H1103.3M55.0 400.46H1103.3M55.0 428.39H1103.3M55.0 456.32H1103.3M55.0 484.25H1103.3M55.0 512.18H1103.3" stroke="#1e4f29" stroke-width=".9" fill="none"/><path d="M251.72 344.4V540.3M905.22 344.4V540.3" stroke="#245f2f" stroke-width=".9" fill="none"/><polyline points="54.9,491.5 107.4,498.1 149.8,501.5 189.4,501.5 221.9,508.6 251.8,508.6 278.8,511.3 303.5,513.6 327.2,518.3 345.8,515 366.8,516.5 385,516.5 402,518 418.5,518 434,525.2 448.4,525.2 462.4,519.8 476.5,511.1 487.9,516.5 501,516.5 512.5,512.2 523,508.9 533.6,505.2 544,499.3 553.9,487.5 564,472.3 573.1,443.5 581.4,450.5 591.2,472.3 598.8,482.1 607.6,488.7 616.3,493.7 623.9,493.7 630.5,498.5 638,502.4 645.7,507.6 652.2,501.7 659.4,507.2 666.4,506.1 673,506.7 678.4,505.7 685,507.2 690.4,508.9 697,508.3 702.4,509.4 707.8,510 714.4,511.5 719.8,513.1 725.3,509.4 730.7,520.9 735.5,512.2 740.5,513.1 746,515.9 751,517.6 755.8,519.2 761.2,434.2 765.6,508.9 770.4,470.1 775,431.3 779.8,473.4 784.1,482.8 788.4,486 792.8,488.2 796.2,489.8 802,491.4 808.7,492.5 815,490.8 821.2,489.4 826.5,490.6 831.6,490.9 838,489.8 844,488.4 850,486.4 856.5,483.8 859.6,485.2 866.9,479 873.2,475.3 879.4,467.6 883.6,458.2 886.3,437.4 888.3,414.6 890.8,441.6 896,483.2 900.2,510.2 902.7,528.9 905.6,530.4 908.1,520.6 911.6,507.1 915.8,499.4 923,495.6 931.4,489.4 939.7,481.1 948,474.8 952.2,469.6 956.3,462.4 961.5,455.1 964.5,448 967.1,434.5 969.5,413 971.2,396.6 972.6,418.5 975,439.9 979.7,458.9 985.7,473.1 991.6,482.7 996.4,486.2 998.7,484.6 1001.1,486.9 1007,483.8 1013,477.9 1019,466 1024.9,451.7 1029.6,432.7 1032,406.6 1033.5,347.1 1034.9,406.6 1038,435.1 1041.5,447 1047.5,460.1 1054.6,468.4 1061.7,472.7 1067.7,474.3 1071.3,469.6 1072.9,466 1074.1,468.9 1077.2,462.4 1080.8,451.7 1083.1,435.1 1085,405.4 1086.7,405.4 1088.4,432.7 1091.5,451.7 1096.2,466 1099.8,472 1102.8,477.9" fill="none" stroke="#f4f4f4" stroke-width="1.05" stroke-opacity=".92" stroke-linejoin="round"/></svg><div class="a" style="left:1101.3px;top:283.4px;width:1px;height:196.9px;background:#e9e9e9"></div><div class="a" style="left:53.0px;top:479.3px;width:1049.3px;height:1px;background:#e4e4e4"></div><span id="by0" class="t" style="left:45.3px;transform-origin:0 0;top:278.5px;font-size:10px;line-height:11.81px;color:#1e1e1e;font-weight:normal;transform:translateX(-100%) scaleX(1.000);transform-origin:100% 0;">-10</span><span id="by1" class="t" style="left:45.3px;transform-origin:0 0;top:306.4px;font-size:10px;line-height:11.81px;color:#1e1e1e;font-weight:normal;transform:translateX(-100%) scaleX(1.000);transform-origin:100% 0;">-20</span><span id="by2" class="t" style="left:45.3px;transform-origin:0 0;top:334.4px;font-size:10px;line-height:11.81px;color:#1e1e1e;font-weight:normal;transform:translateX(-100%) scaleX(1.000);transform-origin:100% 0;">-30</span><span id="by3" class="t" style="left:45.3px;transform-origin:0 0;top:362.3px;font-size:10px;line-height:11.81px;color:#1e1e1e;font-weight:normal;transform:translateX(-100%) scaleX(1.000);transform-origin:100% 0;">-40</span><span id="by4" class="t" style="left:45.3px;transform-origin:0 0;top:390.2px;font-size:10px;line-height:11.81px;color:#1e1e1e;font-weight:normal;transform:translateX(-100%) scaleX(1.000);transform-origin:100% 0;">-50</span><span id="by5" class="t" style="left:45.3px;transform-origin:0 0;top:418.1px;font-size:10px;line-height:11.81px;color:#1e1e1e;font-weight:normal;transform:translateX(-100%) scaleX(1.000);transform-origin:100% 0;">-60</span><span id="by6" class="t" style="left:45.3px;transform-origin:0 0;top:446.1px;font-size:10px;line-height:11.81px;color:#1e1e1e;font-weight:normal;transform:translateX(-100%) scaleX(1.000);transform-origin:100% 0;">-70</span><span id="by7" class="t" style="left:45.3px;transform-origin:0 0;top:474.0px;font-size:10px;line-height:11.81px;color:#1e1e1e;font-weight:normal;transform:translateX(-100%) scaleX(1.000);transform-origin:100% 0;">-80</span><span id="bx5" class="t" style="left:53.0px;top:487.0px;font-size:10px;line-height:11.81px;color:#1e1e1e;font-weight:normal;transform:translateX(-50%) scaleX(1.000);transform-origin:50% 0;">5</span><span id="bx10" class="t" style="left:249.7px;top:487.0px;font-size:10px;line-height:11.81px;color:#1e1e1e;font-weight:normal;transform:translateX(-50%) scaleX(1.000);transform-origin:50% 0;">10</span><span id="bx100" class="t" style="left:903.2px;top:487.0px;font-size:10px;line-height:11.81px;color:#1e1e1e;font-weight:normal;transform:translateX(-50%) scaleX(1.000);transform-origin:50% 0;">100</span><span id="bx200" class="t" style="left:1099.9px;top:487.0px;font-size:10px;line-height:11.81px;color:#1e1e1e;font-weight:normal;transform:translateX(-50%) scaleX(1.000);transform-origin:50% 0;">200</span><svg style="left:0;top:0" width="1174" height="560" viewBox="2 61 1174 560"><path d="M49.4 344.60H53.3M49.4 372.53H53.3M49.4 400.46H53.3M49.4 428.39H53.3M49.4 456.32H53.3M49.4 484.25H53.3M49.4 512.18H53.3M49.4 540.11H53.3M55.00 542.8V546.8M251.72 542.8V546.8M905.22 542.8V546.8M1101.95 542.8V546.8" stroke="#222" stroke-width="1.1" fill="none"/></svg><span id="freq" class="t" style="left:576.0px;top:501.6px;font-size:10px;line-height:11.81px;color:#1e1e1e;font-weight:normal;transform:translateX(-50%) scaleX(1.014);transform-origin:50% 0;">Frequency</span><span id="amp2" class="t" style="left:20.4px;top:381.2px;font-size:10.6px;line-height:10.6px;color:#1e1e1e;will-change:auto;transform:translate(-50%,-50%) rotate(-90deg)">Amplitude</span></div><div class="a" style="left:2px;top:60.400px;width:1189px;height:1.100px;background:#a2a2a2"></div><div class="a" style="left:1176px;top:61px;width:15px;height:575px;background:#f0f0f0"></div><div class="a" style="left:2px;top:621px;width:1189px;height:15px;background:#f0f0f0"></div><div class="a" style="left:1177.2px;top:175.8px;width:12.8px;height:367px;background:#cdcdcd"></div><div class="a" style="left:224px;top:622.2px;width:777.5px;height:12.8px;background:#cdcdcd"></div><svg style="left:1176px;top:61px" width="15" height="575" viewBox="0 0 15 575"><g fill="none" stroke="#444" stroke-width="1.5"><path d="M4.6 11.2L7.6 8l3 3.2"/><path d="M4.6 550.4l3 3.2 3-3.2"/></g></svg><svg style="left:2px;top:621px" width="1174" height="15" viewBox="0 0 1174 15"><g fill="none" stroke="#444" stroke-width="1.5"><path d="M8.6 4.6L5.4 7.6l3.2 3"/><path d="M1165.4 4.6l3.2 3-3.2 3"/></g></svg><div class="a" style="left:0;top:636px;width:1193px;height:2.6px;background:linear-gradient(to bottom,#d8648f,#c9708f)"></div><div class="a" id="taskbar" style="left:0;top:638.5px;width:1193px;height:34.5px;background:linear-gradient(to right,#55526b 0,#5b566e 12%,#695772 28%,#785a72 42%,#7f6078 55%,#85687f 75%,#8a6c84 100%)"><svg style="left:10px;top:5.6px" width="23.5" height="22.5" viewBox="0 0 21 21"><g fill="#fff"><path d="M.5 3.4L8.6 2.2v7.7H.5z"/><path d="M9.8 2L20.5.4v9.5H9.8z"/><path d="M.5 11.1h8.1v7.7L.5 17.6z"/><path d="M9.8 11.1h10.7v9.5L9.8 19z"/></g></svg><svg style="left:56px;top:2.8px" width="29" height="27" viewBox="0 0 29 27"><g fill="none">
<path d="M10 12c0 5 3 7 8 7" stroke="#6fae3d" stroke-width="3"/><path d="M12 8c5 0 8 3 8 8" stroke="#1f8fc4" stroke-width="3"/>
<rect x="2" y="2" width="9.5" height="9.5" stroke="#6fae3d" stroke-width="2.6"/><rect x="15.5" y="14.5" width="10" height="10" stroke="#1f8fc4" stroke-width="2.6"/></g></svg><svg style="left:111.500px;top:2.600px" width="27" height="27" viewBox="0 0 28 28"><defs><radialGradient id="gl" cx=".45" cy=".4" r=".65"><stop offset="0" stop-color="#fff"/><stop offset=".75" stop-color="#e4e7ea"/><stop offset="1" stop-color="#a4acb2"/></radialGradient></defs>
<circle cx="14" cy="14" r="12.800" fill="url(#gl)"/>
<path d="M1.600 16C1 8 7 1.500 15.500 1.200c2.500 0 4 .8 5 1.800C13 3.500 7.500 9 6.500 18.500c-2 0-4-1-4.900-2.500z" fill="#3f9a2c"/>
<path d="M14.500 4.500c5 2.500 7.500 7.500 6 13.500-.8 3-2.500 5.500-4.500 7" stroke="#1f6fb4" stroke-width="2.400" fill="none"/>
<path d="M23.500 8c-5.500 1.500-9.500 4.500-10 7.500-.4 2.600 4 4 12.300 2.800" stroke="#1f6fb4" stroke-width="2.300" fill="none"/></svg><svg style="left:168px;top:2.6px" width="22" height="27" viewBox="0 0 22 27"><rect x=".8" y=".8" width="20.4" height="25.4" rx="1.5" fill="#7db7e4" stroke="#4b8cc4" stroke-width="1"/>
<rect x="3" y="3" width="16" height="7.5" fill="#dbe9f4"/><rect x="3" y="3" width="16" height="2" fill="#f0c890"/>
<g fill="#e8f1f8"><rect x="3" y="12.6" width="3.2" height="2.6"/><rect x="7.4" y="12.6" width="3.2" height="2.6"/><rect x="11.800" y="12.6" width="3.2" height="2.6"/><rect x="16" y="12.6" width="3.2" height="2.6"/>
<rect x="3" y="16.6" width="3.2" height="2.6"/><rect x="7.4" y="16.6" width="3.2" height="2.6"/><rect x="11.8" y="16.6" width="3.2" height="2.6"/>
<rect x="3" y="20.6" width="3.2" height="2.6"/><rect x="7.4" y="20.6" width="3.2" height="2.6"/><rect x="11.8" y="20.6" width="3.2" height="2.6"/></g><rect x="16" y="16.600" width="3.2" height="6.6" fill="#f2c070"/></svg><svg style="left:218px;top:1.2px" width="30" height="30" viewBox="0 0 30 30"><path d="M3 18c0-7 6-11 13-11 6 0 9.500 3 9.500 7.500 0 6-5 11-13 11-2 0-2.500-2-1.500-3.500 1-1.500-.5-2.500-2.500-2.500C5 19.500 3 20 3 18z" fill="#b9d8ea" stroke="#86aac2" stroke-width=".8"/>
<circle cx="8.500" cy="16" r="2" fill="#d8402c"/><circle cx="12" cy="11.500" r="2" fill="#5bb440"/><circle cx="17.500" cy="10.300" r="2" fill="#f0c62c"/><circle cx="14" cy="20.500" r="1.900" fill="#3a63b8"/>
<path d="M24.500 3.500L16 26" stroke="#d08a3c" stroke-width="2.400" stroke-linecap="round"/><path d="M25.300 1.500l-2.300 5 2.600 1z" fill="#e8c49a"/></svg><svg style="left:273px;top:2.2px" width="28" height="27" viewBox="0 0 28 27"><defs><linearGradient id="ol" x1="0" y1="0" x2="0" y2="1"><stop offset="0" stop-color="#fbe3a0"/><stop offset=".55" stop-color="#f7b73c"/><stop offset="1" stop-color="#f3d9a0"/></linearGradient></defs>
<rect x="1" y="1" width="24" height="24.500" rx="1.500" fill="url(#ol)" stroke="#c8861c" stroke-width="1.200"/>
<ellipse cx="9.500" cy="11" rx="4" ry="5.600" fill="none" stroke="#d9780e" stroke-width="3"/>
<path d="M4 24l10-7 10 7z" fill="#fbf3df" stroke="#d4a860" stroke-width=".7"/>
<circle cx="21.500" cy="10.500" r="3.600" fill="#fdf6e6" stroke="#c8a060" stroke-width=".8"/><path d="M21.500 8.500v2.200h1.800" stroke="#875" stroke-width=".8" fill="none"/></svg><svg style="left:328px;top:2.2px" width="28" height="27" viewBox="0 0 28 27"><defs><linearGradient id="xl" x1="0" y1="0" x2="1" y2="1"><stop offset="0" stop-color="#d4ecd0"/><stop offset=".5" stop-color="#5fae52"/><stop offset="1" stop-color="#2d7c34"/></linearGradient></defs>
<rect x="1" y="1" width="23" height="24.500" rx="1.500" fill="url(#xl)" stroke="#e8f3e6" stroke-width="1.200"/>
<path d="M5 5.500l8.500 12M13.500 5.500L5 17.500" stroke="#1f7a2c" stroke-width="3.400"/>
<path d="M12 14l14 2.500-2 9.500-13-1.500z" fill="#f3f7ee" stroke="#b9cfb4" stroke-width=".6"/><path d="M13 17.500l11.500 2M12.500 20.500l11.500 2M17 15l-1.500 9.500" stroke="#7fb277" stroke-width=".8"/></svg><svg style="left:384px;top:2px" width="27" height="28" viewBox="0 0 27 28"><rect x="1.500" y="2" width="17" height="16" fill="#3b6fb8" stroke="#c9d4e2" stroke-width="1.400"/><rect x="5" y="5" width="9" height="8" fill="#a8c8ea"/>
<rect x="6" y="20" width="9" height="2.500" fill="#9aa"/><path d="M3 24.500h15" stroke="#bcc" stroke-width="2"/>
<path d="M12 9l11-2.500 3 3.500v12l-12 3z" fill="#e9b764" stroke="#b98432" stroke-width=".8"/><rect x="14.500" y="4" width="8" height="9" fill="#dfeaf5" stroke="#9ab" stroke-width=".6"/><path d="M12 12l11-2 3 2v10l-12 3z" fill="#f0c880"/></svg><svg style="left:436px;top:2.2px" width="28" height="27" viewBox="0 0 28 27"><defs><linearGradient id="sp" x1="0" y1="0" x2="0" y2="1"><stop offset="0" stop-color="#fdeccb"/><stop offset=".5" stop-color="#f6b24a"/><stop offset="1" stop-color="#fbe2b4"/></linearGradient></defs>
<rect x="1" y="1" width="23.500" height="24.500" rx="1.500" fill="url(#sp)" stroke="#d99030" stroke-width="1.200"/>
<path d="M15 7.500c-1.500-1.800-8-2-8 1.800 0 3.700 8 2.300 8 6.200 0 3.800-6.500 3.600-8.500 1.500" fill="none" stroke="#d0700c" stroke-width="3"/>
<path d="M13.500 15.500l13 2-2.500 8.500-12-2z" fill="#fdf3dc" stroke="#d8b070" stroke-width=".7"/><path d="M16 18.500l7 1-1.500 5" fill="none" stroke="#e3c48a" stroke-width=".8"/></svg><svg style="left:490px;top:2px" width="28" height="28" viewBox="0 0 28 28"><path d="M1.500 16.500l7.500-3 4 4-5 3.500z" fill="#3f7fc4"/><path d="M9 13.500c3-2 5-6.500 8.500-10.500L14 19z" fill="#5a8fd0"/>
<path d="M17.500 3c2.500 5 4.500 13.500 9 17.500-3.500-.5-5 1-6.500 3.500-1.500 2.500-2.500 2-4.500-.5-1.500-2-3-3.500-5-4.500 3-2.500 4.500-9 7-16z" fill="#d8521c"/>
<path d="M17.500 3c1.500 5 1.500 12 .5 18-1 2-2 1.500-3 .5 1.500-5 1.500-12 2.500-18.500z" fill="#f4a03c"/></svg><svg style="left:544px;top:2.2px" width="28" height="27" viewBox="0 0 28 27"><defs><linearGradient id="wd" x1="0" y1="0" x2="1" y2="1"><stop offset="0" stop-color="#f2f6fc"/><stop offset="1" stop-color="#b9cdec"/></linearGradient></defs>
<rect x="1" y="1" width="23.500" height="24.500" rx="1.500" fill="url(#wd)" stroke="#eef3fa" stroke-width="1.200"/>
<path d="M3.500 5.500l3.300 12 3.700-11 3.700 11 3.300-12" fill="none" stroke="#1c55b0" stroke-width="3.200" stroke-linejoin="miter"/>
<path d="M13 17l13.500 2-2 7-12.500-1.500z" fill="#f7f9fd" stroke="#b5c6e2" stroke-width=".6"/><path d="M15 20l9 1.300M14.500 22.500l9 1.300" stroke="#9db6de" stroke-width=".8"/></svg><div class="a" style="left:586.7px;top:0.7999999999999545px;width:138.300px;height:32.300px;box-sizing:border-box;border:1px solid #d9cdd9;background:linear-gradient(to bottom,#b09eb0,#a08ca2);box-shadow:inset 0 0 0 1px rgba(255,255,255,.12)"></div><svg style="left:596px;top:3.2px" width="28" height="24.3" viewBox="0 0 27 23"><rect x="1.500" y=".5" width="23" height="22" fill="#15180f"/>
<path d="M1.500 1.300h23M1.500 21.700h23" stroke="#9a9a9a" stroke-width="1.600" stroke-dasharray="1.600 1.200"/>
<path d="M3 16c2-13 4-13 6 0M16 7c2 13 4 13 6 0" stroke="#3fb8a8" stroke-width="1" fill="none"/>
<path d="M7 4.500l12.500 7L7 18.500z" fill="#f4d81c" stroke="#6b5c00" stroke-width=".9"/><path d="M9.500 11.500h4.600M11.800 9.200v4.600" stroke="#222" stroke-width="1.200"/>
<path d="M0 8h3" stroke="#d33" stroke-width="1"/><path d="M0 15h3" stroke="#47c" stroke-width="1"/><path d="M23 11.500h4" stroke="#d55" stroke-width="1"/></svg><span id="task1" class="t" style="left:626.6px;transform-origin:0 0;top:10.4px;font-size:10.5px;line-height:12.40px;color:#fff;font-weight:normal;transform:scaleX(0.951);">Lab3-1.vi Front Pa...</span><svg style="left:739.5px;top:7px" width="29" height="17.5" viewBox="0 0 29 17"><rect x=".8" y="1" width="16.400" height="13.500" fill="#e8eef6" stroke="#7f9cc4" stroke-width="1.200"/><rect x=".8" y="1" width="16.400" height="2.600" fill="#3f6fb8"/>
<rect x="2.500" y="4.600" width="13" height="5.400" fill="#1d5a2a"/><path d="M3 8l3-2 3 2 3-2 3 1.500" stroke="#7fe07f" stroke-width=".8" fill="none"/>
<path d="M17.500 6h5V3.200l5.700 4.800-5.700 4.800V10h-5z" fill="#2fc42f" stroke="#157a15" stroke-width=".8"/></svg><svg style="left:793px;top:1.4px" width="30" height="29" viewBox="0 0 30 29"><path d="M25 12.500a9.500 9.500 0 1 0-1.800 7.500h-5.200a5 5 0 0 1-8.500-2.500H25.300c.3-1.800 .2-3.500-.3-5zM9.700 12.300a5 5 0 0 1 9.700 0z" fill="#2fb4ea" stroke="#1d8fc8" stroke-width=".6"/>
<path d="M3.500 25.500C-1 19 7 8 17 3.500c6-2.700 10.500-1.500 9.500 3" fill="none" stroke="#f0c030" stroke-width="2.200"/><path d="M3.500 25.500c2 2 6 .5 9-1.500" fill="none" stroke="#f0c030" stroke-width="1.800"/></svg><div class="a" style="left:837px;top:0.7999999999999545px;width:138.300px;height:32.300px;box-sizing:border-box;border:1px solid #a894a8;background:#9a869a"></div><svg style="left:846px;top:1.400px" width="22" height="29" viewBox="0 0 22 29"><path d="M1.500 5.500L9 1.500l2 2.500 8-1V22l-9.500 4.500z" fill="#e9cf6c"/>
<path d="M1.500 5.500V23.500L9 27.500V9z" fill="#f6e596"/><path d="M9 9l3.500-6.500 2.500-.8V21L9 27.500z" fill="#fbf0b8"/>
<path d="M12 7l7-3.500V22l-7 4z" fill="#f0d878"/><path d="M17.500 18.500l1.500-.8v4l-1.500.8z" fill="#fdf8dc"/></svg><span id="task2" class="t" style="left:876.0px;transform-origin:0 0;top:10.4px;font-size:10.5px;line-height:12.40px;color:#fff;font-weight:normal;transform:scaleX(0.910);">Part 1</span><svg style="left:987px;top:8px" width="100" height="20" viewBox="0 0 100 20">
<path d="M2.500 2.500v14" stroke="#fff" stroke-width="1.300"/><path d="M3 3h6.500l-.8 1.800 5.300 0-1.500 3.400H8.300l-.5 1.300H3z" fill="#fff"/>
<rect x="22" y="3.500" width="7" height="6.500" fill="#e8a818"/><rect x="29.500" y="3.500" width="7" height="6.500" fill="#3a72c4"/><rect x="22" y="10.300" width="7" height="6.500" fill="#58a43a"/><rect x="29.500" y="10.300" width="7" height="6.500" fill="#d8462a"/>
<path d="M45.500 3.500v3.500M48.500 3.500v3.500" stroke="#fff" stroke-width="1.100"/><path d="M44.300 7h5.400v3l-1.500 1.500v5h-2.400v-5L44.300 10z" fill="#fff"/>
<rect x="52.300" y="5" width="5.400" height="11.500" rx=".8" fill="#d8d0d8" stroke="#fff" stroke-width="1.200"/><rect x="53.800" y="3.400" width="2.400" height="1.600" fill="#fff"/>
<path d="M64.500 10.200l5-.7-2.600-5.500h1.500l4.500 5.300 3.500-.3c1.400 0 1.400 2.400 0 2.400l-3.500-.3-4.500 5.300h-1.500l2.600-5.500-5-.7z" fill="#fff"/>
<path d="M87 8.300h2.200l3-3v10.400l-3-3H87z" fill="#fff"/><path d="M94.300 7.800c1 1.300 1 3.700 0 5" stroke="#fff" stroke-width=".9" fill="none" opacity=".8"/></svg><span id="eng" class="t" style="left:1099.0px;transform-origin:0 0;top:11.4px;font-size:10.5px;line-height:12.40px;color:#fff;font-weight:normal;transform:scaleX(0.880);">ENG</span><span id="clk1" class="t" style="left:1134.4px;transform-origin:0 0;top:4.4px;font-size:10.5px;line-height:12.40px;color:#fff;font-weight:normal;transform:scaleX(0.958);">10:12 AM</span><span id="clk2" class="t" style="left:1130.8px;transform-origin:0 0;top:19.4px;font-size:10.5px;line-height:12.40px;color:#fff;font-weight:normal;transform:scaleX(0.957);">12/22/2014</span></div></body></html>
